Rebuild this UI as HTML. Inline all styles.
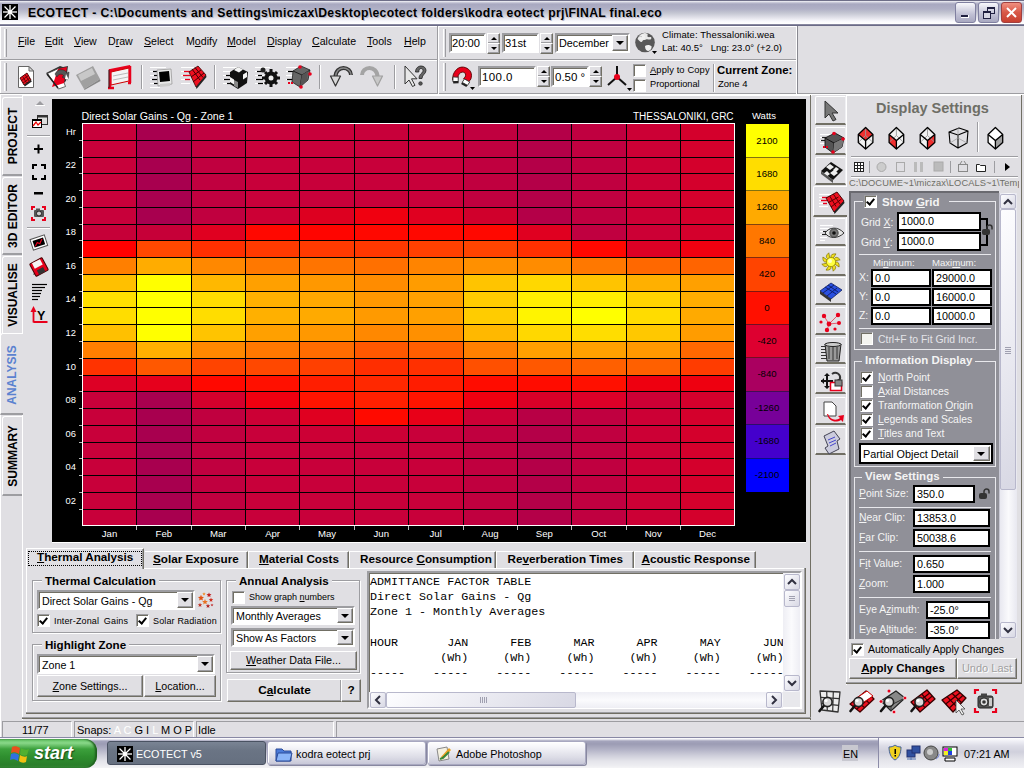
<!DOCTYPE html>
<html><head><meta charset="utf-8"><title>ECOTECT</title>
<style>
*{box-sizing:border-box;margin:0;padding:0}
html,body{width:1024px;height:768px;overflow:hidden}
body{position:relative;background:#e0dfe3;font-family:"Liberation Sans",sans-serif;font-size:11px;color:#000}
.a{position:absolute;white-space:nowrap}
u{text-decoration:underline}
.ylab{position:absolute;left:56px;width:20px;text-align:right;color:#fff;font-size:9.4px;line-height:14px}
.xlab{position:absolute;top:526px;width:40px;text-align:center;color:#fff;font-size:9.6px;line-height:14px}
#chart{position:absolute;left:0;top:0;width:1024px;height:768px}
.sunk{border-top:1px solid #9d9da1;border-left:1px solid #9d9da1;border-right:1px solid #fff;border-bottom:1px solid #fff}
.edit{position:absolute;background:#fff;border:2px solid;border-color:#9d9da1 #fff #fff #9d9da1;box-shadow:inset 1px 1px 0 #716f64;font-size:10.7px;line-height:14px;padding-left:3px}
.raised{background:#e0dfe3;border:1px solid;border-color:#fff #716f64 #716f64 #fff;box-shadow:inset -1px -1px 0 #9d9da1}
.btn{position:absolute;background:#e0dfe3;border:1px solid;border-color:#fff #716f64 #716f64 #fff;box-shadow:inset -1px -1px 0 #9d9da1;text-align:center;font-size:10.7px}
.grip{position:absolute;width:3px;border-left:1px solid #fff;border-right:1px solid #9d9da1}
.vsep{position:absolute;width:2px;border-left:1px solid #9d9da1;border-right:1px solid #fff}
.hsep{position:absolute;height:2px;border-top:1px solid #9d9da1;border-bottom:1px solid #fff}
.spin{position:absolute;width:14px}
.spin i{display:block;position:absolute;left:0;width:13px;background:#e0dfe3;border:1px solid;border-color:#fff #716f64 #716f64 #fff;box-shadow:inset -1px -1px 0 #9d9da1}
.spin i:after{content:"";position:absolute;left:3px;top:3px;border-left:3px solid transparent;border-right:3px solid transparent;border-bottom:3px solid #000}
.spin i+i:after{border-bottom:0;border-top:3px solid #000}
.ddb{position:absolute;width:16px;background:#e0dfe3;border:1px solid;border-color:#fff #716f64 #716f64 #fff;box-shadow:inset -1px -1px 0 #9d9da1}
.ddb:after{content:"";position:absolute;left:3px;top:50%;margin-top:-2px;border-left:4px solid transparent;border-right:4px solid transparent;border-top:4px solid #000}
.chk{position:absolute;width:13px;height:13px;background:#fff;border:1px solid;border-color:#9d9da1 #fff #fff #9d9da1;box-shadow:inset 1px 1px 0 #716f64}
.chk.on:after{content:"";position:absolute;left:3px;top:1px;width:3px;height:6px;border:solid #000;border-width:0 2px 2px 0;transform:rotate(40deg)}
.vtab{position:absolute;left:2px;width:21px;background:#e0dfe3;border:1px solid;border-color:#fff #fff #716f64 #fff;border-left:1px solid #fff}
.vtab span{position:absolute;left:50%;top:50%;transform:translate(-50%,-50%) rotate(-90deg);font-weight:bold;font-size:12px;white-space:nowrap}
.grp{position:absolute;border:1px solid #9d9da1;box-shadow:1px 1px 0 #fff,inset 1px 1px 0 #fff}
.grp>b{position:absolute;left:8px;top:-8px;background:#e0dfe3;padding:0 3px;font-size:11.6px;line-height:14px}
.sbb{border:1px solid #b8b8cc;border-radius:2px;background:linear-gradient(135deg,#fdfdff,#d8d8e4)}.sbb svg{position:absolute;left:0;top:0}
.wg{position:absolute;border:1px solid #e8e8ec}
.wl{color:#f4f4f4;font-size:10.4px;line-height:13px}
.bed{position:absolute;background:#fff;border:2px solid #000;font-size:10.8px;line-height:14px;padding-left:2px;white-space:nowrap}
</style></head><body>
<!-- title bar -->
<div class="a" style="left:0;top:0;width:1024px;height:26px;background:linear-gradient(#6e6e88 0,#6e6e88 1px,#f4f4f8 1px,#c8c8d8 2.5px,#a8a8c0 4px,#b0b0c6 9px,#c4c6d2 13px,#e4e4ec 18px,#f8f8fc 21px,#ffffff 23.5px,#8888a0 24.5px,#6a6a86 25px,#6a6a86 26px)"></div>
<div class="a" style="left:2px;top:4px;width:16px;height:16px;background:#000">
<svg width="16" height="16" style="position:absolute;left:0;top:0"><g stroke="#fff" stroke-width="1.3"><line x1="8" y1="1" x2="8" y2="15"/><line x1="1" y1="8" x2="15" y2="8"/><line x1="2.5" y1="2.5" x2="13.5" y2="13.5"/><line x1="13.5" y1="2.5" x2="2.5" y2="13.5"/></g><circle cx="8" cy="8" r="2" fill="#fff"/></svg></div>
<div class="a" style="left:28px;top:5px;font-weight:bold;font-size:12.2px;letter-spacing:0.34px;line-height:16px;color:#000;text-shadow:1px 1px 0 #b8b8c8">ECOTECT - C:\Documents and Settings\miczax\Desktop\ecotect folders\kodra eotect prj\FINAL final.eco</div>
<!-- window buttons -->
<div class="a" style="left:955px;top:2px;width:21px;height:21px;border:1px solid #8080a0;border-radius:3px;background:linear-gradient(#f8f8fc,#c0c0d4 60%,#a8a8c0)"><div class="a" style="left:5px;top:12px;width:8px;height:3px;background:#202040;border:1px solid #fff;border-width:0 1px 1px 0"></div></div>
<div class="a" style="left:978px;top:2px;width:21px;height:21px;border:1px solid #8080a0;border-radius:3px;background:linear-gradient(#f8f8fc,#c0c0d4 60%,#a8a8c0)"><div class="a" style="left:8px;top:4px;width:8px;height:7px;border:1px solid #202040;border-top-width:2px"></div><div class="a" style="left:4px;top:8px;width:8px;height:8px;border:1px solid #202040;border-top-width:2px;background:#d8d8e4"></div></div>
<div class="a" style="left:1001px;top:2px;width:21px;height:21px;border:1px solid #a04040;border-radius:3px;background:linear-gradient(#f09080,#d85848 50%,#c84030)"><svg width="19" height="19" style="position:absolute;left:0;top:0"><g stroke="#fff" stroke-width="2"><line x1="5" y1="5" x2="14" y2="14"/><line x1="14" y1="5" x2="5" y2="14"/></g></svg></div>
<!-- window left/right borders -->
<div class="a" style="left:0;top:26px;width:1px;height:712px;background:#fff"></div>
<!-- menu bar row -->
<div class="hsep" style="left:0;top:59px;width:438px"></div>
<div class="hsep" style="left:0;top:93px;width:1024px"></div>
<div class="a" style="left:0;top:26px;width:797px;height:1px;background:#fff"></div>
<div class="grip" style="left:4px;top:29px;height:28px"></div>
<div class="grip" style="left:4px;top:63px;height:28px"></div>
<div class="a" style="left:18px;top:35px;font-size:10.6px;line-height:13px;word-spacing:0">
<span class="a" style="left:0"><u>F</u>ile</span><span class="a" style="left:27px"><u>E</u>dit</span><span class="a" style="left:56px"><u>V</u>iew</span><span class="a" style="left:90px">D<u>r</u>aw</span><span class="a" style="left:126px"><u>S</u>elect</span><span class="a" style="left:168px">M<u>o</u>dify</span><span class="a" style="left:209px"><u>M</u>odel</span><span class="a" style="left:249px"><u>D</u>isplay</span><span class="a" style="left:294px"><u>C</u>alculate</span><span class="a" style="left:349px"><u>T</u>ools</span><span class="a" style="left:386px"><u>H</u>elp</span>
</div>
<div class="vsep" style="left:437px;top:26px;height:68px"></div>
<!-- toolbar icons row -->
<svg class="a" style="left:0;top:60px" width="440" height="34">
 <!-- new -->
 <path d="M18.5 6.5h10.5l4.5 4.5v16.5h-15z" fill="#fff" stroke="#666"/><path d="M29 6.5v4.5h4.5z" fill="#d8d8d8" stroke="#666"/>
 <path d="M20 18l7-5 4 7-7 5z" fill="#ee1020" stroke="#400" stroke-width="0.9"/><path d="M22.5 16.3l4 6.5M25 14.5l4 6.5M21.5 20.5l7-5M23 23l7-5" stroke="#500" stroke-width="0.8"/><path d="M24 25l7-5 0.8 1.5-7 5z" fill="#222"/>
 <!-- open folder -->
 <path d="M46 13l14-7 3 1 5 -1 -2 15 -8 7z" fill="#333"/>
 <path d="M47.5 13.5l11-5 7 18-7 2.5z" fill="#fff" stroke="#444" stroke-width="0.8"/>
 <path d="M52 27l6-18 9-2-3 16z" fill="#e8001c"/><path d="M47 14l11 14" stroke="#222" stroke-width="1.5"/>
 <path d="M55 14c2-5 9-6 12-1l2-1-1 8-6-3 2-1c-2-3-6-2-7 1z" fill="#555" stroke="#222" stroke-width="0.5"/><path d="M66 14l3 6-4-1z" fill="#fff"/>
 <!-- save grey -->
 <path d="M76 15l17-9 7 13-16 10z" fill="#a0a0a0"/><path d="M78 15l14-7 3 6-14 7z" fill="#c8c8c8"/><path d="M84 29l16-10 0.5 2-16 9z" fill="#888"/>
 <!-- plotter red -->
 <path d="M110 9l20-4 1 3-20 5z" fill="#e8001c"/><path d="M111 12l18-4 0 13-18 4z" fill="#f4f4f4" stroke="#c00" stroke-width="1"/><path d="M113 16l15-3M113 20l15-3" stroke="#bbb" stroke-width="1"/>
 <path d="M110 9v19M108 28h6M130 6v17M128 23h3" stroke="#e8001c" stroke-width="2.5"/><path d="M109 10v18" stroke="#222" stroke-width="1"/>
 <!-- sep -->
 <rect x="141" y="5" width="1" height="24" fill="#9d9da1"/><rect x="142" y="5" width="1" height="24" fill="#fff"/>
 <!-- screen icon -->
 <g stroke="#fff" stroke-width="1"><line x1="150" y1="7.5" x2="166" y2="7.5"/><line x1="150" y1="11.5" x2="164" y2="11.5"/><line x1="150" y1="15.5" x2="160" y2="15.5"/><line x1="150" y1="19.5" x2="160" y2="19.5"/><line x1="150" y1="23.5" x2="162" y2="23.5"/><line x1="150" y1="27.5" x2="160" y2="27.5"/></g>
 <g stroke="#000" stroke-width="1.2"><line x1="153" y1="11.5" x2="158" y2="11.5"/><line x1="154" y1="15.5" x2="158" y2="15.5"/><line x1="152" y1="19.5" x2="158" y2="19.5"/><line x1="154" y1="23.5" x2="158" y2="23.5"/></g>
 <path d="M157 10l14-1 1 15-14 2z" fill="#e8e8e8" stroke="#999" stroke-width="0.8"/><path d="M159 12l10-1 1 10-10 1z" fill="#000"/><path d="M160 24l10-1v3l-10 1z" fill="#ccc"/>
 <!-- red grid -->
 <g stroke="#fff" stroke-width="1"><line x1="181" y1="7.5" x2="194" y2="7.5"/><line x1="181" y1="11.5" x2="190" y2="11.5"/><line x1="181" y1="15.5" x2="188" y2="15.5"/><line x1="181" y1="19.5" x2="188" y2="19.5"/><line x1="181" y1="23.5" x2="190" y2="23.5"/></g>
 <g stroke="#e8001c" stroke-width="1.3"><line x1="184" y1="11.5" x2="191" y2="11.5"/><line x1="183" y1="15.5" x2="190" y2="15.5"/><line x1="185" y1="19.5" x2="190" y2="19.5"/></g>
 <path d="M189 12l9-6 8 9-10 12z" fill="#ee1020" stroke="#300" stroke-width="0.8"/><path d="M192 9l8 11M195 7.5l8 10M191 17l10-7M193 22l11-9" stroke="#400" stroke-width="1"/><path d="M196 27l10-12 0.5 2-10 12z" fill="#222"/>
 <rect x="214" y="5" width="1" height="24" fill="#9d9da1"/><rect x="215" y="5" width="1" height="24" fill="#fff"/>
 <!-- gear cube icons -->
 <g stroke="#fff" stroke-width="1"><line x1="223" y1="7.5" x2="238" y2="7.5"/><line x1="223" y1="11.5" x2="234" y2="11.5"/><line x1="223" y1="15.5" x2="232" y2="15.5"/><line x1="223" y1="19.5" x2="232" y2="19.5"/><line x1="223" y1="23.5" x2="234" y2="23.5"/></g>
 <g stroke="#000" stroke-width="1.2"><line x1="226" y1="15.5" x2="232" y2="15.5"/><line x1="224" y1="19.5" x2="232" y2="19.5"/><line x1="227" y1="23.5" x2="233" y2="23.5"/></g>
 <path d="M230 12l8-5 10 5-1 11-9 6-8-5z" fill="#111"/><path d="M238 7l5 2.5-4 3-5-2.5zM243 14.5l4-2.5v5l-4 2.5zM230 17l4 2.5v5l-4-2.5z" fill="#f4f4f4"/><path d="M234 20l4 2v6l-4-2z" fill="#888"/>
 <g stroke="#fff" stroke-width="1"><line x1="255" y1="7.5" x2="270" y2="7.5"/><line x1="255" y1="11.5" x2="266" y2="11.5"/><line x1="255" y1="15.5" x2="264" y2="15.5"/><line x1="255" y1="19.5" x2="264" y2="19.5"/><line x1="255" y1="23.5" x2="266" y2="23.5"/></g>
 <g stroke="#000" stroke-width="1.2"><line x1="257" y1="11.5" x2="262" y2="11.5"/><line x1="258" y1="15.5" x2="262" y2="15.5"/><line x1="256" y1="19.5" x2="263" y2="19.5"/><line x1="258" y1="23.5" x2="263" y2="23.5"/></g>
 <circle cx="271" cy="18" r="6.5" fill="#111"/><g stroke="#111" stroke-width="3"><path d="M271 9v18M262 18h18M265 12l12 12M277 12l-12 12"/></g><circle cx="271" cy="18" r="2.5" fill="#eee"/><circle cx="263" cy="10" r="2.5" fill="#222"/>
 <g stroke="#fff" stroke-width="1"><line x1="286" y1="7.5" x2="300" y2="7.5"/><line x1="286" y1="11.5" x2="296" y2="11.5"/><line x1="286" y1="15.5" x2="294" y2="15.5"/><line x1="286" y1="19.5" x2="294" y2="19.5"/></g>
 <g stroke="#000" stroke-width="1.2"><line x1="288" y1="11.5" x2="294" y2="11.5"/><line x1="287" y1="19.5" x2="293" y2="19.5"/></g>
 <path d="M293 11l8-5 9 4-2 10-8 7-8-5z" fill="#666" stroke="#222" stroke-width="0.8"/><path d="M293 11l9 4 8-5M302 15l-2 12" stroke="#222" fill="none"/><path d="M302 15l6-4-1 9-7 6z" fill="#555"/>
 <circle cx="300" cy="7" r="1.8" fill="#e8001c"/><circle cx="310" cy="14" r="1.8" fill="#e8001c"/><circle cx="301" cy="27" r="1.8" fill="#e8001c"/><rect x="288" y="22" width="2" height="2" fill="#e8001c"/><rect x="291" y="22" width="2" height="2" fill="#e8001c"/>
 <rect x="319" y="5" width="1" height="24" fill="#9d9da1"/><rect x="320" y="5" width="1" height="24" fill="#fff"/>
 <!-- undo/redo -->
 <path d="M335.5 17c0-6 4-9 8-9s7.5 3 7.5 7" stroke="#333" stroke-width="4" fill="none" stroke-linecap="butt"/><path d="M335.5 17c0-6 4-9 8-9s7.5 3 7.5 7" stroke="#888" stroke-width="1.5" fill="none"/>
 <path d="M330.5 16h10l-5 10z" fill="#d8d8d8" stroke="#333" stroke-width="1.2" stroke-linejoin="round"/>
 <path d="M377.5 17c0-6-4-9-8-9s-7.5 3-7.5 7" stroke="#a4a4a4" stroke-width="4" fill="none"/>
 <path d="M382.5 16h-10l5 10z" fill="#c8c8c8" stroke="#a0a0a0" stroke-width="1.2" stroke-linejoin="round"/>
 <rect x="394" y="5" width="1" height="24" fill="#9d9da1"/><rect x="395" y="5" width="1" height="24" fill="#fff"/>
 <!-- help arrow -->
 <path d="M405 6v18l4-4 3.5 6.5 2.5-1.2-3.5-6.5h5.5z" fill="#e8e8e8" stroke="#333" stroke-width="1"/>
 <path d="M415.5 12c0-4 3-6 5.5-6 3 0 5 2 5 4.5 0 3.5-4 4-4 8h-3c0-5 4-5 4-8 0-1.2-0.8-2-2-2-1.5 0-2.2 1.2-2.2 3.5z" fill="#666" stroke="#222" stroke-width="0.8"/><circle cx="420.5" cy="23.5" r="1.8" fill="#555" stroke="#222" stroke-width="0.6"/>
</svg>
<!-- right toolbar with date controls -->
<div class="grip" style="left:443px;top:29px;height:28px"></div>
<div class="grip" style="left:443px;top:63px;height:28px"></div>
<div class="hsep" style="left:440px;top:59px;width:358px"></div>
<div class="a" style="left:796px;top:26px;width:1px;height:68px;background:#fff"></div>
<div class="a" style="left:797px;top:26px;width:1px;height:68px;background:#888890"></div>
<div class="edit" style="left:449px;top:33px;width:37px;height:20px;padding-top:1px;padding-left:1px;font-size:11.2px">20:00</div>
<div class="spin" style="left:487px;top:33px;height:20px"><i style="top:0;height:11px"></i><i style="top:10px;height:11px"></i></div>
<div class="edit" style="left:502px;top:33px;width:37px;height:20px;padding-top:1px;padding-left:1px;font-size:11.2px">31st</div>
<div class="spin" style="left:540px;top:33px;height:20px"><i style="top:0;height:11px"></i><i style="top:10px;height:11px"></i></div>
<div class="edit" style="left:555px;top:33px;width:75px;height:20px;padding-top:1px;padding-left:2px;font-size:10.8px">December<div class="ddb" style="right:0;top:0;height:16px;width:16px"></div></div>
<svg class="a" style="left:634px;top:31px" width="26" height="26"><circle cx="11" cy="11.5" r="9.8" fill="#585858"/><path d="M3.5 8c1-3 4-5.5 7-6 2 0 4 1 3 2.5-1 1 1 2 2.5 1.5s2 1.5 0.5 2.5c-2 0.5-3-1-4.5 0-1.5 1-3 0-3.5 1.5-0.5 1.5-2 1-3 0z" fill="#e8e8e8"/><path d="M5 6c1-1 2-1 3 0" stroke="#999" fill="none"/><path d="M11 15c2-1.5 5-1.5 6.5 0.5 0.5 2-1 4-3 4.5-2 0-3.5-1.5-3.5-5z" fill="#f0f0f0"/><circle cx="8" cy="6" r="3" fill="#fff" opacity="0.35"/><path d="M18 20h5l-2.5 3z" fill="#000"/></svg>
<div class="a" style="left:662px;top:29px;font-size:9.5px;line-height:12px;letter-spacing:0.1px">Climate: Thessaloniki.wea</div>
<div class="a" style="left:662px;top:41.5px;font-size:9.5px;line-height:12px">Lat: 40.5°&nbsp;&nbsp; Lng: 23.0° (+2.0)</div>
<svg class="a" style="left:450px;top:64px" width="28" height="28"><g transform="rotate(20 12 13)"><path d="M3 14c0-7 4-11 9-11s9 3 9 9l-1 3-6-1 1-2c0-3-1-4-3-4s-4 2-4 5l1 4-5 2z" fill="#e8001c" stroke="#500" stroke-width="0.8"/><path d="M3.5 16l5-1.5 1.5 4-5 2zM15 14l6 1-1 4-6-1z" fill="#fff" stroke="#333" stroke-width="0.8"/><path d="M5 20l5-2 1 2-5 2zM14 18l6 1-0.5 2-6-1z" fill="#222"/></g><path d="M20 23h5l-2.5 3z" fill="#000"/></svg>
<div class="edit" style="left:478px;top:66px;width:58px;height:21px;padding-top:2px;padding-left:2px;font-size:11.5px;letter-spacing:0.4px">100.0</div>
<div class="spin" style="left:537px;top:66px;height:21px"><i style="top:0;height:11px"></i><i style="top:10px;height:11px"></i></div>
<div class="edit" style="left:551px;top:66px;width:38px;height:21px;padding-top:2px;padding-left:2px;font-size:11.5px">0.50 °</div>
<div class="spin" style="left:589px;top:66px;height:21px"><i style="top:0;height:11px"></i><i style="top:10px;height:11px"></i></div>
<svg class="a" style="left:605px;top:63px" width="28" height="28"><g stroke="#111" stroke-width="2"><line x1="12" y1="14" x2="12" y2="3"/><line x1="12" y1="14" x2="3" y2="22"/><line x1="12" y1="14" x2="21" y2="22"/></g><circle cx="12" cy="14" r="3" fill="#e8001c"/><path d="M22 25h5l-2.5 3z" fill="#000"/></svg>
<div class="chk" style="left:633px;top:64px"></div>
<div class="chk" style="left:633px;top:79px"></div>
<div class="a" style="left:650px;top:64px;font-size:9.4px;line-height:12px;letter-spacing:0.1px"><u>A</u>pply to Copy</div>
<div class="a" style="left:650px;top:78px;font-size:9.2px;line-height:12px">Proportional</div>
<div class="vsep" style="left:713px;top:64px;height:28px"></div>
<div class="a" style="left:717px;top:63px;font-size:11.4px;font-weight:bold;line-height:14px">Current Zone:</div>
<div class="a" style="left:718px;top:78px;font-size:9.5px;line-height:12px">Zone 4</div>
<!-- main panel -->
<div class="a" style="left:22px;top:95px;width:790px;height:1px;background:#fff"></div>
<div class="a" style="left:22px;top:95px;width:1px;height:625px;background:#fff"></div>
<div class="a" style="left:810px;top:95px;width:1px;height:625px;background:#716f64"></div>
<!-- vertical tabs -->
<div class="a" style="left:2px;top:97px;width:20px;height:79px;border-left:1px solid #fff;border-top:1px solid #fff;border-bottom:2px solid #9d9da1;border-radius:3px 0 0 0"></div>
<div class="a" style="left:2px;top:177px;width:20px;height:78px;border-left:1px solid #fff;border-top:1px solid #fff;border-bottom:2px solid #9d9da1;border-radius:3px 0 0 0"></div>
<div class="a" style="left:2px;top:256px;width:20px;height:79px;border-left:1px solid #fff;border-top:1px solid #fff;border-bottom:0;border-radius:3px 0 0 0"></div>
<div class="a" style="left:0px;top:333px;width:23px;height:82px;background:#e0dfe3;border-left:1px solid #fff;border-top:1px solid #fff;border-bottom:2px solid #9d9da1;border-radius:3px 0 0 0"></div>
<div class="a" style="left:2px;top:416px;width:20px;height:80px;border-left:1px solid #fff;border-top:1px solid #fff;border-bottom:2px solid #9d9da1;border-radius:3px 0 0 0"></div>
<div class="a" style="left:3px;top:136px;width:20px;height:0">
<div class="a" style="left:50%;top:0;transform:translate(-50%,-50%) rotate(-90deg);font-weight:bold;font-size:12px;line-height:14px">PROJECT</div></div>
<div class="a" style="left:3px;top:216px;width:20px;height:0">
<div class="a" style="left:50%;top:0;transform:translate(-50%,-50%) rotate(-90deg);font-weight:bold;font-size:12px;line-height:14px">3D EDITOR</div></div>
<div class="a" style="left:3px;top:295px;width:20px;height:0">
<div class="a" style="left:50%;top:0;transform:translate(-50%,-50%) rotate(-90deg);font-weight:bold;font-size:12px;line-height:14px">VISUALISE</div></div>
<div class="a" style="left:2px;top:375px;width:20px;height:0">
<div class="a" style="left:50%;top:0;transform:translate(-50%,-50%) rotate(-90deg);font-weight:bold;font-size:12px;line-height:14px;color:#5b82d0">ANALYSIS</div></div>
<div class="a" style="left:3px;top:456px;width:20px;height:0">
<div class="a" style="left:50%;top:0;transform:translate(-50%,-50%) rotate(-90deg);font-weight:bold;font-size:12px;line-height:14px">SUMMARY</div></div>
<!-- left tool column -->
<svg class="a" style="left:23px;top:96px" width="30" height="235">
 <path d="M13 9l4-4 4 4z" fill="#9d9da1"/><rect x="12" y="9" width="10" height="1" fill="#fff"/>
 <rect x="14.5" y="19.5" width="10" height="9" fill="#ddd" stroke="#333"/><rect x="14.5" y="19.5" width="10" height="2" fill="#333"/>
 <rect x="9" y="23" width="10" height="9" fill="#000"/><rect x="10" y="25" width="8" height="6" fill="#fff"/><path d="M10 30l3-4 2 3 3-3" stroke="#e00" stroke-width="1.3" fill="none"/>
 <rect x="4" y="39" width="23" height="1" fill="#9d9da1"/><rect x="4" y="40" width="23" height="1" fill="#fff"/>
 <rect x="11" y="52" width="9" height="2" fill="#000"/><rect x="14.5" y="48.5" width="2" height="9" fill="#000"/>
 <path d="M10 73v-4h4M18 69h4v4M22 79v4h-4M14 83h-4v-4" stroke="#000" stroke-width="2" fill="none"/>
 <rect x="11" y="96" width="9" height="2.5" fill="#000"/>
 <path d="M9 114v-3h3M19 111h3v3M22 121v3h-3M12 124h-3v-3" stroke="#e8001c" stroke-width="2" fill="none"/>
 <rect x="11" y="114" width="10" height="7" rx="1" fill="#555"/><circle cx="16" cy="117.5" r="2.5" fill="#ccc" stroke="#222"/><rect x="13" y="112.5" width="4" height="2" fill="#555"/>
 <rect x="4" y="131" width="23" height="1" fill="#9d9da1"/><rect x="4" y="132" width="23" height="1" fill="#fff"/>
 <g transform="rotate(-18 16 147)"><rect x="8.5" y="141" width="15" height="11" fill="#fff" stroke="#555" stroke-width="1"/><rect x="10.5" y="143" width="11" height="7" fill="#000"/><path d="M11.5 149l3-3 2 2 3.5-4" stroke="#e8001c" stroke-width="1.2" fill="none"/></g>
 <path d="M10 178l9-6 1 0.5-9 6.5z" fill="#555"/>
 <g transform="rotate(-28 16 171)"><rect x="9" y="164" width="14" height="14" rx="1" fill="#e8001c" stroke="#400" stroke-width="1"/><rect x="11.5" y="164.5" width="9" height="6" fill="#f4f4f4"/><rect x="12.5" y="173" width="7" height="5" fill="#333"/></g>
 <g stroke="#000" stroke-width="1.2"><line x1="9" y1="188.5" x2="24" y2="188.5"/><line x1="9" y1="191.5" x2="22" y2="191.5"/><line x1="9" y1="194.5" x2="19" y2="194.5"/><line x1="9" y1="197.5" x2="18" y2="197.5"/><line x1="9" y1="200.5" x2="17" y2="200.5"/><line x1="9" y1="203.5" x2="15" y2="203.5"/></g>
 <path d="M10.5 226h14M10.5 226.5v-12" stroke="#e8001c" stroke-width="1.8" fill="none"/><path d="M7.5 216l3-6 3 6z" fill="#e8001c"/>
 <text x="14" y="224" font-family="Liberation Sans" font-weight="bold" font-size="12.5" fill="#000">Y</text>
</svg>
<!-- chart bg -->
<div class="a" style="left:52px;top:99px;width:754px;height:444px;background:#000;border-bottom:1px solid #fff"></div>
<div id="chart">
<svg width="1024" height="768" style="position:absolute;left:0;top:0" shape-rendering="crispEdges">
<rect x="82.3" y="123.3" width="55.0" height="17.4" fill="#c8003a"/>
<rect x="136.7" y="123.3" width="55.0" height="17.4" fill="#a8004f"/>
<rect x="191.0" y="123.3" width="55.0" height="17.4" fill="#c0003f"/>
<rect x="245.4" y="123.3" width="55.0" height="17.4" fill="#c8003a"/>
<rect x="299.8" y="123.3" width="55.0" height="17.4" fill="#c8003a"/>
<rect x="354.1" y="123.3" width="55.0" height="17.4" fill="#c8003a"/>
<rect x="408.5" y="123.3" width="55.0" height="17.4" fill="#c8003a"/>
<rect x="462.9" y="123.3" width="55.0" height="17.4" fill="#c0003f"/>
<rect x="517.2" y="123.3" width="55.0" height="17.4" fill="#b40048"/>
<rect x="571.6" y="123.3" width="55.0" height="17.4" fill="#c00040"/>
<rect x="626.0" y="123.3" width="55.0" height="17.4" fill="#cc0035"/>
<rect x="680.3" y="123.3" width="55.0" height="17.4" fill="#d4002c"/>
<rect x="82.3" y="140.1" width="55.0" height="17.4" fill="#c8003a"/>
<rect x="136.7" y="140.1" width="55.0" height="17.4" fill="#a8004f"/>
<rect x="191.0" y="140.1" width="55.0" height="17.4" fill="#c0003f"/>
<rect x="245.4" y="140.1" width="55.0" height="17.4" fill="#c8003a"/>
<rect x="299.8" y="140.1" width="55.0" height="17.4" fill="#c8003a"/>
<rect x="354.1" y="140.1" width="55.0" height="17.4" fill="#c8003a"/>
<rect x="408.5" y="140.1" width="55.0" height="17.4" fill="#c8003a"/>
<rect x="462.9" y="140.1" width="55.0" height="17.4" fill="#c0003f"/>
<rect x="517.2" y="140.1" width="55.0" height="17.4" fill="#b40048"/>
<rect x="571.6" y="140.1" width="55.0" height="17.4" fill="#c00040"/>
<rect x="626.0" y="140.1" width="55.0" height="17.4" fill="#cc0035"/>
<rect x="680.3" y="140.1" width="55.0" height="17.4" fill="#d4002c"/>
<rect x="82.3" y="156.8" width="55.0" height="17.4" fill="#c8003a"/>
<rect x="136.7" y="156.8" width="55.0" height="17.4" fill="#a8004f"/>
<rect x="191.0" y="156.8" width="55.0" height="17.4" fill="#c0003f"/>
<rect x="245.4" y="156.8" width="55.0" height="17.4" fill="#c8003a"/>
<rect x="299.8" y="156.8" width="55.0" height="17.4" fill="#c8003a"/>
<rect x="354.1" y="156.8" width="55.0" height="17.4" fill="#c8003a"/>
<rect x="408.5" y="156.8" width="55.0" height="17.4" fill="#c8003a"/>
<rect x="462.9" y="156.8" width="55.0" height="17.4" fill="#c0003f"/>
<rect x="517.2" y="156.8" width="55.0" height="17.4" fill="#b40048"/>
<rect x="571.6" y="156.8" width="55.0" height="17.4" fill="#c00040"/>
<rect x="626.0" y="156.8" width="55.0" height="17.4" fill="#cc0035"/>
<rect x="680.3" y="156.8" width="55.0" height="17.4" fill="#d4002c"/>
<rect x="82.3" y="173.6" width="55.0" height="17.4" fill="#c8003a"/>
<rect x="136.7" y="173.6" width="55.0" height="17.4" fill="#a8004f"/>
<rect x="191.0" y="173.6" width="55.0" height="17.4" fill="#c0003f"/>
<rect x="245.4" y="173.6" width="55.0" height="17.4" fill="#c8003a"/>
<rect x="299.8" y="173.6" width="55.0" height="17.4" fill="#c8003a"/>
<rect x="354.1" y="173.6" width="55.0" height="17.4" fill="#c8003a"/>
<rect x="408.5" y="173.6" width="55.0" height="17.4" fill="#c8003a"/>
<rect x="462.9" y="173.6" width="55.0" height="17.4" fill="#c0003f"/>
<rect x="517.2" y="173.6" width="55.0" height="17.4" fill="#b40048"/>
<rect x="571.6" y="173.6" width="55.0" height="17.4" fill="#c00040"/>
<rect x="626.0" y="173.6" width="55.0" height="17.4" fill="#cc0035"/>
<rect x="680.3" y="173.6" width="55.0" height="17.4" fill="#d4002c"/>
<rect x="82.3" y="190.4" width="55.0" height="17.4" fill="#c8003a"/>
<rect x="136.7" y="190.4" width="55.0" height="17.4" fill="#a8004f"/>
<rect x="191.0" y="190.4" width="55.0" height="17.4" fill="#c0003f"/>
<rect x="245.4" y="190.4" width="55.0" height="17.4" fill="#c8003a"/>
<rect x="299.8" y="190.4" width="55.0" height="17.4" fill="#c8003a"/>
<rect x="354.1" y="190.4" width="55.0" height="17.4" fill="#c8003a"/>
<rect x="408.5" y="190.4" width="55.0" height="17.4" fill="#c8003a"/>
<rect x="462.9" y="190.4" width="55.0" height="17.4" fill="#c0003f"/>
<rect x="517.2" y="190.4" width="55.0" height="17.4" fill="#b40048"/>
<rect x="571.6" y="190.4" width="55.0" height="17.4" fill="#c00040"/>
<rect x="626.0" y="190.4" width="55.0" height="17.4" fill="#cc0035"/>
<rect x="680.3" y="190.4" width="55.0" height="17.4" fill="#d4002c"/>
<rect x="82.3" y="207.2" width="55.0" height="17.4" fill="#c8003a"/>
<rect x="136.7" y="207.2" width="55.0" height="17.4" fill="#a8004f"/>
<rect x="191.0" y="207.2" width="55.0" height="17.4" fill="#c0003f"/>
<rect x="245.4" y="207.2" width="55.0" height="17.4" fill="#cc0035"/>
<rect x="299.8" y="207.2" width="55.0" height="17.4" fill="#dd0020"/>
<rect x="354.1" y="207.2" width="55.0" height="17.4" fill="#f00010"/>
<rect x="408.5" y="207.2" width="55.0" height="17.4" fill="#e00020"/>
<rect x="462.9" y="207.2" width="55.0" height="17.4" fill="#d0002c"/>
<rect x="517.2" y="207.2" width="55.0" height="17.4" fill="#b40048"/>
<rect x="571.6" y="207.2" width="55.0" height="17.4" fill="#c00040"/>
<rect x="626.0" y="207.2" width="55.0" height="17.4" fill="#cc0035"/>
<rect x="680.3" y="207.2" width="55.0" height="17.4" fill="#d4002c"/>
<rect x="82.3" y="223.9" width="55.0" height="17.4" fill="#c60038"/>
<rect x="136.7" y="223.9" width="55.0" height="17.4" fill="#c60038"/>
<rect x="191.0" y="223.9" width="55.0" height="17.4" fill="#e00020"/>
<rect x="245.4" y="223.9" width="55.0" height="17.4" fill="#ff0800"/>
<rect x="299.8" y="223.9" width="55.0" height="17.4" fill="#ff0500"/>
<rect x="354.1" y="223.9" width="55.0" height="17.4" fill="#ff0800"/>
<rect x="408.5" y="223.9" width="55.0" height="17.4" fill="#ff0800"/>
<rect x="462.9" y="223.9" width="55.0" height="17.4" fill="#ff0800"/>
<rect x="517.2" y="223.9" width="55.0" height="17.4" fill="#e00020"/>
<rect x="571.6" y="223.9" width="55.0" height="17.4" fill="#c00040"/>
<rect x="626.0" y="223.9" width="55.0" height="17.4" fill="#cc0035"/>
<rect x="680.3" y="223.9" width="55.0" height="17.4" fill="#d4002c"/>
<rect x="82.3" y="240.7" width="55.0" height="17.4" fill="#ff0000"/>
<rect x="136.7" y="240.7" width="55.0" height="17.4" fill="#ff4800"/>
<rect x="191.0" y="240.7" width="55.0" height="17.4" fill="#ff3000"/>
<rect x="245.4" y="240.7" width="55.0" height="17.4" fill="#ff3a00"/>
<rect x="299.8" y="240.7" width="55.0" height="17.4" fill="#ff3a00"/>
<rect x="354.1" y="240.7" width="55.0" height="17.4" fill="#ff3800"/>
<rect x="408.5" y="240.7" width="55.0" height="17.4" fill="#ff4000"/>
<rect x="462.9" y="240.7" width="55.0" height="17.4" fill="#ff4400"/>
<rect x="517.2" y="240.7" width="55.0" height="17.4" fill="#ff3000"/>
<rect x="571.6" y="240.7" width="55.0" height="17.4" fill="#ff0800"/>
<rect x="626.0" y="240.7" width="55.0" height="17.4" fill="#dd0025"/>
<rect x="680.3" y="240.7" width="55.0" height="17.4" fill="#f00010"/>
<rect x="82.3" y="257.5" width="55.0" height="17.4" fill="#ff7f00"/>
<rect x="136.7" y="257.5" width="55.0" height="17.4" fill="#ffac00"/>
<rect x="191.0" y="257.5" width="55.0" height="17.4" fill="#ff8800"/>
<rect x="245.4" y="257.5" width="55.0" height="17.4" fill="#ff7800"/>
<rect x="299.8" y="257.5" width="55.0" height="17.4" fill="#ff7400"/>
<rect x="354.1" y="257.5" width="55.0" height="17.4" fill="#ff7000"/>
<rect x="408.5" y="257.5" width="55.0" height="17.4" fill="#ff8400"/>
<rect x="462.9" y="257.5" width="55.0" height="17.4" fill="#ff9000"/>
<rect x="517.2" y="257.5" width="55.0" height="17.4" fill="#ff8c00"/>
<rect x="571.6" y="257.5" width="55.0" height="17.4" fill="#ff7800"/>
<rect x="626.0" y="257.5" width="55.0" height="17.4" fill="#ff6800"/>
<rect x="680.3" y="257.5" width="55.0" height="17.4" fill="#ff6400"/>
<rect x="82.3" y="274.2" width="55.0" height="17.4" fill="#ffc000"/>
<rect x="136.7" y="274.2" width="55.0" height="17.4" fill="#ffff00"/>
<rect x="191.0" y="274.2" width="55.0" height="17.4" fill="#ffb800"/>
<rect x="245.4" y="274.2" width="55.0" height="17.4" fill="#ffa000"/>
<rect x="299.8" y="274.2" width="55.0" height="17.4" fill="#ff9800"/>
<rect x="354.1" y="274.2" width="55.0" height="17.4" fill="#ff8c00"/>
<rect x="408.5" y="274.2" width="55.0" height="17.4" fill="#ff9c00"/>
<rect x="462.9" y="274.2" width="55.0" height="17.4" fill="#ffc400"/>
<rect x="517.2" y="274.2" width="55.0" height="17.4" fill="#ffd800"/>
<rect x="571.6" y="274.2" width="55.0" height="17.4" fill="#ffc400"/>
<rect x="626.0" y="274.2" width="55.0" height="17.4" fill="#ffb000"/>
<rect x="680.3" y="274.2" width="55.0" height="17.4" fill="#ffa000"/>
<rect x="82.3" y="291.0" width="55.0" height="17.4" fill="#ffe000"/>
<rect x="136.7" y="291.0" width="55.0" height="17.4" fill="#ffff00"/>
<rect x="191.0" y="291.0" width="55.0" height="17.4" fill="#ffdc00"/>
<rect x="245.4" y="291.0" width="55.0" height="17.4" fill="#ffb000"/>
<rect x="299.8" y="291.0" width="55.0" height="17.4" fill="#ffa800"/>
<rect x="354.1" y="291.0" width="55.0" height="17.4" fill="#ff9800"/>
<rect x="408.5" y="291.0" width="55.0" height="17.4" fill="#ffa000"/>
<rect x="462.9" y="291.0" width="55.0" height="17.4" fill="#ffcc00"/>
<rect x="517.2" y="291.0" width="55.0" height="17.4" fill="#ffee00"/>
<rect x="571.6" y="291.0" width="55.0" height="17.4" fill="#ffee00"/>
<rect x="626.0" y="291.0" width="55.0" height="17.4" fill="#ffd400"/>
<rect x="680.3" y="291.0" width="55.0" height="17.4" fill="#ffac00"/>
<rect x="82.3" y="307.8" width="55.0" height="17.4" fill="#ffdd00"/>
<rect x="136.7" y="307.8" width="55.0" height="17.4" fill="#ffff00"/>
<rect x="191.0" y="307.8" width="55.0" height="17.4" fill="#ffdd00"/>
<rect x="245.4" y="307.8" width="55.0" height="17.4" fill="#ffb000"/>
<rect x="299.8" y="307.8" width="55.0" height="17.4" fill="#ffaa00"/>
<rect x="354.1" y="307.8" width="55.0" height="17.4" fill="#ff9a00"/>
<rect x="408.5" y="307.8" width="55.0" height="17.4" fill="#ffa000"/>
<rect x="462.9" y="307.8" width="55.0" height="17.4" fill="#ffcc00"/>
<rect x="517.2" y="307.8" width="55.0" height="17.4" fill="#fff400"/>
<rect x="571.6" y="307.8" width="55.0" height="17.4" fill="#ffff00"/>
<rect x="626.0" y="307.8" width="55.0" height="17.4" fill="#ffdc00"/>
<rect x="680.3" y="307.8" width="55.0" height="17.4" fill="#ffaa00"/>
<rect x="82.3" y="324.6" width="55.0" height="17.4" fill="#ffc000"/>
<rect x="136.7" y="324.6" width="55.0" height="17.4" fill="#ffff00"/>
<rect x="191.0" y="324.6" width="55.0" height="17.4" fill="#ffc400"/>
<rect x="245.4" y="324.6" width="55.0" height="17.4" fill="#ffa000"/>
<rect x="299.8" y="324.6" width="55.0" height="17.4" fill="#ff9800"/>
<rect x="354.1" y="324.6" width="55.0" height="17.4" fill="#ff8800"/>
<rect x="408.5" y="324.6" width="55.0" height="17.4" fill="#ff9000"/>
<rect x="462.9" y="324.6" width="55.0" height="17.4" fill="#ffb800"/>
<rect x="517.2" y="324.6" width="55.0" height="17.4" fill="#ffd800"/>
<rect x="571.6" y="324.6" width="55.0" height="17.4" fill="#ffdd00"/>
<rect x="626.0" y="324.6" width="55.0" height="17.4" fill="#ffc800"/>
<rect x="680.3" y="324.6" width="55.0" height="17.4" fill="#ff9c00"/>
<rect x="82.3" y="341.3" width="55.0" height="17.4" fill="#ff7f00"/>
<rect x="136.7" y="341.3" width="55.0" height="17.4" fill="#ffb000"/>
<rect x="191.0" y="341.3" width="55.0" height="17.4" fill="#ff8800"/>
<rect x="245.4" y="341.3" width="55.0" height="17.4" fill="#ff7800"/>
<rect x="299.8" y="341.3" width="55.0" height="17.4" fill="#ff6c00"/>
<rect x="354.1" y="341.3" width="55.0" height="17.4" fill="#ff5800"/>
<rect x="408.5" y="341.3" width="55.0" height="17.4" fill="#ff5e00"/>
<rect x="462.9" y="341.3" width="55.0" height="17.4" fill="#ff8000"/>
<rect x="517.2" y="341.3" width="55.0" height="17.4" fill="#ffa000"/>
<rect x="571.6" y="341.3" width="55.0" height="17.4" fill="#ffa000"/>
<rect x="626.0" y="341.3" width="55.0" height="17.4" fill="#ff9800"/>
<rect x="680.3" y="341.3" width="55.0" height="17.4" fill="#ff6800"/>
<rect x="82.3" y="358.1" width="55.0" height="17.4" fill="#ff3300"/>
<rect x="136.7" y="358.1" width="55.0" height="17.4" fill="#ff5800"/>
<rect x="191.0" y="358.1" width="55.0" height="17.4" fill="#ff4400"/>
<rect x="245.4" y="358.1" width="55.0" height="17.4" fill="#ff4800"/>
<rect x="299.8" y="358.1" width="55.0" height="17.4" fill="#ff4000"/>
<rect x="354.1" y="358.1" width="55.0" height="17.4" fill="#ff2e00"/>
<rect x="408.5" y="358.1" width="55.0" height="17.4" fill="#ff3000"/>
<rect x="462.9" y="358.1" width="55.0" height="17.4" fill="#ff5000"/>
<rect x="517.2" y="358.1" width="55.0" height="17.4" fill="#ff5800"/>
<rect x="571.6" y="358.1" width="55.0" height="17.4" fill="#ff6000"/>
<rect x="626.0" y="358.1" width="55.0" height="17.4" fill="#ff6000"/>
<rect x="680.3" y="358.1" width="55.0" height="17.4" fill="#ff3c00"/>
<rect x="82.3" y="374.9" width="55.0" height="17.4" fill="#dd0025"/>
<rect x="136.7" y="374.9" width="55.0" height="17.4" fill="#e6001c"/>
<rect x="191.0" y="374.9" width="55.0" height="17.4" fill="#ff0800"/>
<rect x="245.4" y="374.9" width="55.0" height="17.4" fill="#ff1000"/>
<rect x="299.8" y="374.9" width="55.0" height="17.4" fill="#ff1e00"/>
<rect x="354.1" y="374.9" width="55.0" height="17.4" fill="#ff2800"/>
<rect x="408.5" y="374.9" width="55.0" height="17.4" fill="#ff1c00"/>
<rect x="462.9" y="374.9" width="55.0" height="17.4" fill="#ff0c00"/>
<rect x="517.2" y="374.9" width="55.0" height="17.4" fill="#ff0c00"/>
<rect x="571.6" y="374.9" width="55.0" height="17.4" fill="#ff1000"/>
<rect x="626.0" y="374.9" width="55.0" height="17.4" fill="#ee0010"/>
<rect x="680.3" y="374.9" width="55.0" height="17.4" fill="#ee0010"/>
<rect x="82.3" y="391.6" width="55.0" height="17.4" fill="#c8003a"/>
<rect x="136.7" y="391.6" width="55.0" height="17.4" fill="#a8004f"/>
<rect x="191.0" y="391.6" width="55.0" height="17.4" fill="#d4002c"/>
<rect x="245.4" y="391.6" width="55.0" height="17.4" fill="#f00010"/>
<rect x="299.8" y="391.6" width="55.0" height="17.4" fill="#ff1400"/>
<rect x="354.1" y="391.6" width="55.0" height="17.4" fill="#ff2000"/>
<rect x="408.5" y="391.6" width="55.0" height="17.4" fill="#ff1400"/>
<rect x="462.9" y="391.6" width="55.0" height="17.4" fill="#f00010"/>
<rect x="517.2" y="391.6" width="55.0" height="17.4" fill="#d80028"/>
<rect x="571.6" y="391.6" width="55.0" height="17.4" fill="#dd0028"/>
<rect x="626.0" y="391.6" width="55.0" height="17.4" fill="#cc0035"/>
<rect x="680.3" y="391.6" width="55.0" height="17.4" fill="#d4002c"/>
<rect x="82.3" y="408.4" width="55.0" height="17.4" fill="#c8003a"/>
<rect x="136.7" y="408.4" width="55.0" height="17.4" fill="#a8004f"/>
<rect x="191.0" y="408.4" width="55.0" height="17.4" fill="#c0003f"/>
<rect x="245.4" y="408.4" width="55.0" height="17.4" fill="#cc0035"/>
<rect x="299.8" y="408.4" width="55.0" height="17.4" fill="#e00020"/>
<rect x="354.1" y="408.4" width="55.0" height="17.4" fill="#ff0a00"/>
<rect x="408.5" y="408.4" width="55.0" height="17.4" fill="#e80018"/>
<rect x="462.9" y="408.4" width="55.0" height="17.4" fill="#cc0035"/>
<rect x="517.2" y="408.4" width="55.0" height="17.4" fill="#b80045"/>
<rect x="571.6" y="408.4" width="55.0" height="17.4" fill="#c00040"/>
<rect x="626.0" y="408.4" width="55.0" height="17.4" fill="#cc0035"/>
<rect x="680.3" y="408.4" width="55.0" height="17.4" fill="#d4002c"/>
<rect x="82.3" y="425.2" width="55.0" height="17.4" fill="#c8003a"/>
<rect x="136.7" y="425.2" width="55.0" height="17.4" fill="#a8004f"/>
<rect x="191.0" y="425.2" width="55.0" height="17.4" fill="#c0003f"/>
<rect x="245.4" y="425.2" width="55.0" height="17.4" fill="#c8003a"/>
<rect x="299.8" y="425.2" width="55.0" height="17.4" fill="#cc0035"/>
<rect x="354.1" y="425.2" width="55.0" height="17.4" fill="#cc0035"/>
<rect x="408.5" y="425.2" width="55.0" height="17.4" fill="#c8003a"/>
<rect x="462.9" y="425.2" width="55.0" height="17.4" fill="#c0003f"/>
<rect x="517.2" y="425.2" width="55.0" height="17.4" fill="#b40048"/>
<rect x="571.6" y="425.2" width="55.0" height="17.4" fill="#c00040"/>
<rect x="626.0" y="425.2" width="55.0" height="17.4" fill="#cc0035"/>
<rect x="680.3" y="425.2" width="55.0" height="17.4" fill="#d4002c"/>
<rect x="82.3" y="441.9" width="55.0" height="17.4" fill="#c8003a"/>
<rect x="136.7" y="441.9" width="55.0" height="17.4" fill="#a8004f"/>
<rect x="191.0" y="441.9" width="55.0" height="17.4" fill="#c0003f"/>
<rect x="245.4" y="441.9" width="55.0" height="17.4" fill="#c8003a"/>
<rect x="299.8" y="441.9" width="55.0" height="17.4" fill="#c8003a"/>
<rect x="354.1" y="441.9" width="55.0" height="17.4" fill="#c8003a"/>
<rect x="408.5" y="441.9" width="55.0" height="17.4" fill="#c8003a"/>
<rect x="462.9" y="441.9" width="55.0" height="17.4" fill="#c0003f"/>
<rect x="517.2" y="441.9" width="55.0" height="17.4" fill="#b40048"/>
<rect x="571.6" y="441.9" width="55.0" height="17.4" fill="#c00040"/>
<rect x="626.0" y="441.9" width="55.0" height="17.4" fill="#cc0035"/>
<rect x="680.3" y="441.9" width="55.0" height="17.4" fill="#d4002c"/>
<rect x="82.3" y="458.7" width="55.0" height="17.4" fill="#c8003a"/>
<rect x="136.7" y="458.7" width="55.0" height="17.4" fill="#a8004f"/>
<rect x="191.0" y="458.7" width="55.0" height="17.4" fill="#c0003f"/>
<rect x="245.4" y="458.7" width="55.0" height="17.4" fill="#c8003a"/>
<rect x="299.8" y="458.7" width="55.0" height="17.4" fill="#c8003a"/>
<rect x="354.1" y="458.7" width="55.0" height="17.4" fill="#c8003a"/>
<rect x="408.5" y="458.7" width="55.0" height="17.4" fill="#c8003a"/>
<rect x="462.9" y="458.7" width="55.0" height="17.4" fill="#c0003f"/>
<rect x="517.2" y="458.7" width="55.0" height="17.4" fill="#b40048"/>
<rect x="571.6" y="458.7" width="55.0" height="17.4" fill="#c00040"/>
<rect x="626.0" y="458.7" width="55.0" height="17.4" fill="#cc0035"/>
<rect x="680.3" y="458.7" width="55.0" height="17.4" fill="#d4002c"/>
<rect x="82.3" y="475.5" width="55.0" height="17.4" fill="#c8003a"/>
<rect x="136.7" y="475.5" width="55.0" height="17.4" fill="#a8004f"/>
<rect x="191.0" y="475.5" width="55.0" height="17.4" fill="#c0003f"/>
<rect x="245.4" y="475.5" width="55.0" height="17.4" fill="#c8003a"/>
<rect x="299.8" y="475.5" width="55.0" height="17.4" fill="#c8003a"/>
<rect x="354.1" y="475.5" width="55.0" height="17.4" fill="#c8003a"/>
<rect x="408.5" y="475.5" width="55.0" height="17.4" fill="#c8003a"/>
<rect x="462.9" y="475.5" width="55.0" height="17.4" fill="#c0003f"/>
<rect x="517.2" y="475.5" width="55.0" height="17.4" fill="#b40048"/>
<rect x="571.6" y="475.5" width="55.0" height="17.4" fill="#c00040"/>
<rect x="626.0" y="475.5" width="55.0" height="17.4" fill="#cc0035"/>
<rect x="680.3" y="475.5" width="55.0" height="17.4" fill="#d4002c"/>
<rect x="82.3" y="492.3" width="55.0" height="17.4" fill="#c8003a"/>
<rect x="136.7" y="492.3" width="55.0" height="17.4" fill="#a8004f"/>
<rect x="191.0" y="492.3" width="55.0" height="17.4" fill="#c0003f"/>
<rect x="245.4" y="492.3" width="55.0" height="17.4" fill="#c8003a"/>
<rect x="299.8" y="492.3" width="55.0" height="17.4" fill="#c8003a"/>
<rect x="354.1" y="492.3" width="55.0" height="17.4" fill="#c8003a"/>
<rect x="408.5" y="492.3" width="55.0" height="17.4" fill="#c8003a"/>
<rect x="462.9" y="492.3" width="55.0" height="17.4" fill="#c0003f"/>
<rect x="517.2" y="492.3" width="55.0" height="17.4" fill="#b40048"/>
<rect x="571.6" y="492.3" width="55.0" height="17.4" fill="#c00040"/>
<rect x="626.0" y="492.3" width="55.0" height="17.4" fill="#cc0035"/>
<rect x="680.3" y="492.3" width="55.0" height="17.4" fill="#d4002c"/>
<rect x="82.3" y="509.0" width="55.0" height="17.4" fill="#c8003a"/>
<rect x="136.7" y="509.0" width="55.0" height="17.4" fill="#a8004f"/>
<rect x="191.0" y="509.0" width="55.0" height="17.4" fill="#c0003f"/>
<rect x="245.4" y="509.0" width="55.0" height="17.4" fill="#c8003a"/>
<rect x="299.8" y="509.0" width="55.0" height="17.4" fill="#c8003a"/>
<rect x="354.1" y="509.0" width="55.0" height="17.4" fill="#c8003a"/>
<rect x="408.5" y="509.0" width="55.0" height="17.4" fill="#c8003a"/>
<rect x="462.9" y="509.0" width="55.0" height="17.4" fill="#c0003f"/>
<rect x="517.2" y="509.0" width="55.0" height="17.4" fill="#b40048"/>
<rect x="571.6" y="509.0" width="55.0" height="17.4" fill="#c00040"/>
<rect x="626.0" y="509.0" width="55.0" height="17.4" fill="#cc0035"/>
<rect x="680.3" y="509.0" width="55.0" height="17.4" fill="#d4002c"/>
<rect x="82.3" y="140" width="652.4" height="1" fill="#000"/>
<rect x="82.3" y="157" width="652.4" height="1" fill="#000"/>
<rect x="82.3" y="173" width="652.4" height="1" fill="#000"/>
<rect x="82.3" y="190" width="652.4" height="1" fill="#000"/>
<rect x="82.3" y="207" width="652.4" height="1" fill="#000"/>
<rect x="82.3" y="224" width="652.4" height="1" fill="#000"/>
<rect x="82.3" y="240" width="652.4" height="1" fill="#000"/>
<rect x="82.3" y="257" width="652.4" height="1" fill="#000"/>
<rect x="82.3" y="274" width="652.4" height="1" fill="#000"/>
<rect x="82.3" y="291" width="652.4" height="1" fill="#000"/>
<rect x="82.3" y="307" width="652.4" height="1" fill="#000"/>
<rect x="82.3" y="324" width="652.4" height="1" fill="#000"/>
<rect x="82.3" y="341" width="652.4" height="1" fill="#000"/>
<rect x="82.3" y="358" width="652.4" height="1" fill="#000"/>
<rect x="82.3" y="375" width="652.4" height="1" fill="#000"/>
<rect x="82.3" y="391" width="652.4" height="1" fill="#000"/>
<rect x="82.3" y="408" width="652.4" height="1" fill="#000"/>
<rect x="82.3" y="425" width="652.4" height="1" fill="#000"/>
<rect x="82.3" y="442" width="652.4" height="1" fill="#000"/>
<rect x="82.3" y="458" width="652.4" height="1" fill="#000"/>
<rect x="82.3" y="475" width="652.4" height="1" fill="#000"/>
<rect x="82.3" y="492" width="652.4" height="1" fill="#000"/>
<rect x="82.3" y="509" width="652.4" height="1" fill="#000"/>
<rect x="136" y="123.3" width="1" height="402.5" fill="#000"/>
<rect x="191" y="123.3" width="1" height="402.5" fill="#000"/>
<rect x="245" y="123.3" width="1" height="402.5" fill="#000"/>
<rect x="299" y="123.3" width="1" height="402.5" fill="#000"/>
<rect x="354" y="123.3" width="1" height="402.5" fill="#000"/>
<rect x="408" y="123.3" width="1" height="402.5" fill="#000"/>
<rect x="463" y="123.3" width="1" height="402.5" fill="#000"/>
<rect x="517" y="123.3" width="1" height="402.5" fill="#000"/>
<rect x="571" y="123.3" width="1" height="402.5" fill="#000"/>
<rect x="626" y="123.3" width="1" height="402.5" fill="#000"/>
<rect x="680" y="123.3" width="1" height="402.5" fill="#000"/>
<rect x="82" y="123" width="653" height="1" fill="#fff"/><rect x="82" y="525" width="653" height="1" fill="#fff"/><rect x="82" y="123" width="1" height="403" fill="#fff"/><rect x="734" y="123" width="1" height="403" fill="#fff"/>
<rect x="79" y="140" width="3" height="1" fill="#bbb"/>
<rect x="79" y="157" width="3" height="1" fill="#bbb"/>
<rect x="79" y="173" width="3" height="1" fill="#bbb"/>
<rect x="79" y="190" width="3" height="1" fill="#bbb"/>
<rect x="79" y="207" width="3" height="1" fill="#bbb"/>
<rect x="79" y="224" width="3" height="1" fill="#bbb"/>
<rect x="79" y="240" width="3" height="1" fill="#bbb"/>
<rect x="79" y="257" width="3" height="1" fill="#bbb"/>
<rect x="79" y="274" width="3" height="1" fill="#bbb"/>
<rect x="79" y="291" width="3" height="1" fill="#bbb"/>
<rect x="79" y="307" width="3" height="1" fill="#bbb"/>
<rect x="79" y="324" width="3" height="1" fill="#bbb"/>
<rect x="79" y="341" width="3" height="1" fill="#bbb"/>
<rect x="79" y="358" width="3" height="1" fill="#bbb"/>
<rect x="79" y="375" width="3" height="1" fill="#bbb"/>
<rect x="79" y="391" width="3" height="1" fill="#bbb"/>
<rect x="79" y="408" width="3" height="1" fill="#bbb"/>
<rect x="79" y="425" width="3" height="1" fill="#bbb"/>
<rect x="79" y="442" width="3" height="1" fill="#bbb"/>
<rect x="79" y="458" width="3" height="1" fill="#bbb"/>
<rect x="79" y="475" width="3" height="1" fill="#bbb"/>
<rect x="79" y="492" width="3" height="1" fill="#bbb"/>
<rect x="79" y="509" width="3" height="1" fill="#bbb"/>
<rect x="136" y="526" width="1" height="4" fill="#bbb"/>
<rect x="191" y="526" width="1" height="4" fill="#bbb"/>
<rect x="245" y="526" width="1" height="4" fill="#bbb"/>
<rect x="299" y="526" width="1" height="4" fill="#bbb"/>
<rect x="354" y="526" width="1" height="4" fill="#bbb"/>
<rect x="408" y="526" width="1" height="4" fill="#bbb"/>
<rect x="463" y="526" width="1" height="4" fill="#bbb"/>
<rect x="517" y="526" width="1" height="4" fill="#bbb"/>
<rect x="571" y="526" width="1" height="4" fill="#bbb"/>
<rect x="626" y="526" width="1" height="4" fill="#bbb"/>
<rect x="680" y="526" width="1" height="4" fill="#bbb"/>
<rect x="746" y="123.8" width="43" height="33.9" fill="#ffff00"/>
<text x="767" y="143.5" text-anchor="middle" font-family="Liberation Sans" font-size="9.6" fill="#000">2100</text>
<rect x="746" y="157.2" width="43" height="33.9" fill="#ffdd00"/>
<rect x="746" y="157" width="43" height="1" fill="#1a1a1a" opacity="0.55"/>
<text x="767" y="176.9" text-anchor="middle" font-family="Liberation Sans" font-size="9.6" fill="#000">1680</text>
<rect x="746" y="190.6" width="43" height="33.9" fill="#ffaa00"/>
<rect x="746" y="190" width="43" height="1" fill="#1a1a1a" opacity="0.55"/>
<text x="767" y="210.3" text-anchor="middle" font-family="Liberation Sans" font-size="9.6" fill="#000">1260</text>
<rect x="746" y="224.0" width="43" height="33.9" fill="#ff7700"/>
<rect x="746" y="224" width="43" height="1" fill="#1a1a1a" opacity="0.55"/>
<text x="767" y="243.7" text-anchor="middle" font-family="Liberation Sans" font-size="9.6" fill="#000">840</text>
<rect x="746" y="257.4" width="43" height="33.9" fill="#ff4400"/>
<rect x="746" y="257" width="43" height="1" fill="#1a1a1a" opacity="0.55"/>
<text x="767" y="277.1" text-anchor="middle" font-family="Liberation Sans" font-size="9.6" fill="#000">420</text>
<rect x="746" y="290.8" width="43" height="33.9" fill="#ff1000"/>
<rect x="746" y="291" width="43" height="1" fill="#1a1a1a" opacity="0.55"/>
<text x="767" y="310.5" text-anchor="middle" font-family="Liberation Sans" font-size="9.6" fill="#000">0</text>
<rect x="746" y="324.2" width="43" height="33.9" fill="#dd0030"/>
<rect x="746" y="324" width="43" height="1" fill="#1a1a1a" opacity="0.55"/>
<text x="767" y="343.9" text-anchor="middle" font-family="Liberation Sans" font-size="9.6" fill="#000">-420</text>
<rect x="746" y="357.6" width="43" height="33.9" fill="#aa0060"/>
<rect x="746" y="357" width="43" height="1" fill="#1a1a1a" opacity="0.55"/>
<text x="767" y="377.3" text-anchor="middle" font-family="Liberation Sans" font-size="9.6" fill="#000">-840</text>
<rect x="746" y="391.0" width="43" height="33.9" fill="#770099"/>
<rect x="746" y="391" width="43" height="1" fill="#1a1a1a" opacity="0.55"/>
<text x="767" y="410.7" text-anchor="middle" font-family="Liberation Sans" font-size="9.6" fill="#000">-1260</text>
<rect x="746" y="424.4" width="43" height="33.9" fill="#4400cc"/>
<rect x="746" y="424" width="43" height="1" fill="#1a1a1a" opacity="0.55"/>
<text x="767" y="444.1" text-anchor="middle" font-family="Liberation Sans" font-size="9.6" fill="#000">-1680</text>
<rect x="746" y="457.8" width="43" height="33.9" fill="#0000ff"/>
<rect x="746" y="458" width="43" height="1" fill="#1a1a1a" opacity="0.55"/>
<text x="767" y="477.5" text-anchor="middle" font-family="Liberation Sans" font-size="9.6" fill="#000">-2100</text>
</svg><div class="ylab" style="top:124.7px">Hr</div>
<div class="ylab" style="top:158.2px">22</div>
<div class="ylab" style="top:191.8px">20</div>
<div class="ylab" style="top:225.3px">18</div>
<div class="ylab" style="top:258.9px">16</div>
<div class="ylab" style="top:292.4px">14</div>
<div class="ylab" style="top:325.9px">12</div>
<div class="ylab" style="top:359.5px">10</div>
<div class="ylab" style="top:393.0px">08</div>
<div class="ylab" style="top:426.6px">06</div>
<div class="ylab" style="top:460.1px">04</div>
<div class="ylab" style="top:493.6px">02</div>
<div class="xlab" style="left:89.5px;top:527px">Jan</div>
<div class="xlab" style="left:143.9px;top:527px">Feb</div>
<div class="xlab" style="left:198.2px;top:527px">Mar</div>
<div class="xlab" style="left:252.6px;top:527px">Apr</div>
<div class="xlab" style="left:307.0px;top:527px">May</div>
<div class="xlab" style="left:361.3px;top:527px">Jun</div>
<div class="xlab" style="left:415.7px;top:527px">Jul</div>
<div class="xlab" style="left:470.1px;top:527px">Aug</div>
<div class="xlab" style="left:524.4px;top:527px">Sep</div>
<div class="xlab" style="left:578.8px;top:527px">Oct</div>
<div class="xlab" style="left:633.2px;top:527px">Nov</div>
<div class="xlab" style="left:687.5px;top:527px">Dec</div><div class="a" style="left:81.5px;top:110px;color:#fff;font-size:10.6px;line-height:13px">Direct Solar Gains - Qg - Zone 1</div>
<div class="a" style="left:633px;top:110px;color:#fff;font-size:10px;line-height:13px">THESSALONIKI, GRC</div>
<div class="a" style="left:752px;top:110px;color:#fff;font-size:9.5px;line-height:12px">Watts</div>
</div>
<!-- outer main panel bottom -->
<div class="a" style="left:22px;top:717px;width:789px;height:1px;background:#9d9da1"></div><div class="a" style="left:22px;top:718px;width:789px;height:1px;background:#716f64"></div>
<!-- bottom tab strip -->
<div class="a" style="left:26px;top:568px;width:780px;height:1px;background:#fff"></div>
<div class="a" style="left:26px;top:568px;width:1px;height:145px;background:#fff"></div>
<div class="a" style="left:804px;top:568px;width:1px;height:145px;background:#9d9da1"></div>
<div class="a" style="left:805px;top:568px;width:1px;height:146px;background:#716f64"></div>
<div class="a" style="left:26px;top:712px;width:779px;height:1px;background:#9d9da1"></div>
<div class="a" style="left:26px;top:713px;width:780px;height:1px;background:#716f64"></div>
<!-- tabs -->
<div class="a" style="left:26px;top:548px;width:118px;height:21px;background:#e0dfe3;border:1px solid;border-color:#fff #716f64 transparent #fff;border-bottom:0;box-shadow:inset -1px 0 0 #9d9da1"></div>
<div class="a" style="left:28px;top:551px;width:114px;height:15px;border:1px dotted #000"></div>
<div class="a" style="left:37px;top:550px;font-weight:bold;font-size:11.7px;line-height:14px"><u>T</u>hermal Analysis</div>
<div class="a" style="left:145px;top:551px;width:103px;height:17px;border-top:1px solid #fff;border-right:1px solid #716f64;box-shadow:inset -1px 0 0 #9d9da1"></div>
<div class="a" style="left:153px;top:552px;font-weight:bold;font-size:11.7px;line-height:14px"><u>S</u>olar Exposure</div>
<div class="a" style="left:248px;top:551px;width:101px;height:17px;border-top:1px solid #fff;border-left:1px solid #fff;border-right:1px solid #716f64;box-shadow:inset -1px 0 0 #9d9da1"></div>
<div class="a" style="left:259px;top:552px;font-weight:bold;font-size:11.7px;line-height:14px"><u>M</u>aterial Costs</div>
<div class="a" style="left:349px;top:551px;width:147px;height:17px;border-top:1px solid #fff;border-left:1px solid #fff;border-right:1px solid #716f64;box-shadow:inset -1px 0 0 #9d9da1"></div>
<div class="a" style="left:360px;top:552px;font-weight:bold;font-size:11.7px;line-height:14px">Resource <u>C</u>onsumption</div>
<div class="a" style="left:496px;top:551px;width:138px;height:17px;border-top:1px solid #fff;border-left:1px solid #fff;border-right:1px solid #716f64;box-shadow:inset -1px 0 0 #9d9da1"></div>
<div class="a" style="left:507.5px;top:552px;font-weight:bold;font-size:11.7px;line-height:14px">Re<u>v</u>erberation Times</div>
<div class="a" style="left:634px;top:551px;width:122px;height:17px;border-top:1px solid #fff;border-left:1px solid #fff;border-right:1px solid #716f64;box-shadow:inset -1px 0 0 #9d9da1"></div>
<div class="a" style="left:641.5px;top:552px;font-weight:bold;font-size:11.7px;line-height:14px"><u>A</u>coustic Response</div>
<!-- Thermal Calculation group -->
<div class="grp" style="left:32px;top:580px;width:189px;height:53px"><b style="left:9px;top:-7px;padding:0 3px">Thermal Calculation</b></div>
<div class="edit" style="left:37px;top:590px;width:158px;height:20px;padding-top:2px">Direct Solar Gains - Qg<div class="ddb" style="right:0;top:0;height:16px"></div></div>
<svg class="a" style="left:196px;top:591px" width="18" height="18"><path d="M5.0 3.8 L5.8 5.8 L8.0 6.0 L6.4 7.4 L6.9 9.6 L5.0 8.4 L3.1 9.6 L3.6 7.4 L2.0 6.0 L4.2 5.8Z" fill="#e05010"/><path d="M13.0 1.4 L13.7 3.1 L15.5 3.2 L14.1 4.4 L14.5 6.1 L13.0 5.2 L11.5 6.1 L11.9 4.4 L10.5 3.2 L12.3 3.1Z" fill="#c02020"/><path d="M15.0 6.6 L15.6 8.1 L17.3 8.3 L16.0 9.3 L16.4 10.9 L15.0 10.1 L13.6 10.9 L14.0 9.3 L12.7 8.3 L14.4 8.1Z" fill="#d03020"/><path d="M9.0 8.0 L9.8 9.9 L11.9 10.1 L10.3 11.4 L10.8 13.4 L9.0 12.3 L7.2 13.4 L7.7 11.4 L6.1 10.1 L8.2 9.9Z" fill="#e87020"/><path d="M4.0 11.7 L4.6 13.2 L6.2 13.3 L5.0 14.3 L5.4 15.9 L4.0 15.0 L2.6 15.9 L3.0 14.3 L1.8 13.3 L3.4 13.2Z" fill="#c03020"/><path d="M12.0 12.7 L12.6 14.2 L14.2 14.3 L13.0 15.3 L13.4 16.9 L12.0 16.0 L10.6 16.9 L11.0 15.3 L9.8 14.3 L11.4 14.2Z" fill="#b02020"/><path d="M8.0 1.2 L8.5 2.3 L9.7 2.4 L8.8 3.3 L9.1 4.5 L8.0 3.8 L6.9 4.5 L7.2 3.3 L6.3 2.4 L7.5 2.3Z" fill="#f09030"/><path d="M16.0 12.4 L16.4 13.4 L17.5 13.5 L16.7 14.2 L16.9 15.3 L16.0 14.7 L15.1 15.3 L15.3 14.2 L14.5 13.5 L15.6 13.4Z" fill="#c03030"/></svg>
<div class="chk on" style="left:37px;top:614px"></div>
<div class="a" style="left:54px;top:615px;font-size:9px;line-height:12px;letter-spacing:0.15px;word-spacing:2px">Inter-Zonal Gains</div>
<div class="chk on" style="left:136px;top:614px"></div>
<div class="a" style="left:153px;top:615px;font-size:9px;line-height:12px;letter-spacing:0.15px">Solar Radiation</div>
<!-- Highlight zone group -->
<div class="grp" style="left:32px;top:644px;width:189px;height:57px"><b style="left:9px;top:-7px;padding:0 3px">Highlight Zone</b></div>
<div class="edit" style="left:37px;top:654px;width:178px;height:20px;padding-top:2px">Zone 1<div class="ddb" style="right:0;top:0;height:16px"></div></div>
<div class="btn" style="left:37px;top:675px;width:106px;height:22px;line-height:20px"><u>Z</u>one Settings...</div>
<div class="btn" style="left:144px;top:675px;width:72px;height:22px;line-height:20px"><u>L</u>ocation...</div>
<!-- Annual analysis group -->
<div class="grp" style="left:226px;top:580px;width:134px;height:93px"><b style="left:9px;top:-7px;padding:0 3px">Annual Analysis</b></div>
<div class="chk" style="left:232px;top:591px"></div>
<div class="a" style="left:249px;top:591px;font-size:9px;line-height:12px">Show graph <u>n</u>umbers</div>
<div class="edit" style="left:231px;top:606px;width:124px;height:19px;padding-top:1px">Monthly Averages<div class="ddb" style="right:0;top:0;height:15px"></div></div>
<div class="edit" style="left:231px;top:628px;width:124px;height:19px;padding-top:1px">Show As Factors<div class="ddb" style="right:0;top:0;height:15px"></div></div>
<div class="btn" style="left:230px;top:651px;width:127px;height:19px;line-height:17px"><u>W</u>eather Data File...</div>
<div class="btn" style="left:227px;top:679px;width:115px;height:23px;line-height:21px;font-weight:bold;font-size:11.8px">C<u>a</u>lculate</div>
<div class="btn" style="left:341px;top:679px;width:20px;height:23px;line-height:21px;font-weight:bold;font-size:11.8px">?</div>
<!-- text area -->
<div class="a" style="left:367px;top:571px;width:435px;height:138px;background:#fff;border:2px solid;border-color:#9d9da1 #fff #fff #9d9da1;box-shadow:inset 1px 1px 0 #716f64"></div>
<div class="a" style="left:369px;top:573px;width:414px;height:119px;overflow:hidden"><pre style="position:absolute;left:1px;top:2px;white-space:pre;font-family:'Liberation Mono',monospace;font-size:11.7px;line-height:15.2px;color:#000">ADMITTANCE FACTOR TABLE
Direct Solar Gains - Qg
Zone 1 - Monthly Averages

HOUR       JAN      FEB      MAR      APR      MAY      JUN
          (Wh)     (Wh)     (Wh)     (Wh)     (Wh)     (Wh)
-----    -----    -----    -----    -----    -----    -----</pre></div>
<!-- vertical scrollbar -->
<div class="a" style="left:783px;top:573px;width:17px;height:119px;background:linear-gradient(90deg,#eeeef4,#fbfbfd 50%,#eeeef4)"></div>
<div class="a sbb" style="left:784px;top:574px;width:16px;height:16px"><svg width="14" height="14"><path d="M3 9l4-4 4 4" stroke="#303040" stroke-width="2" fill="none"/></svg></div>
<div class="a sbb" style="left:784px;top:590px;width:16px;height:17px"><svg width="14" height="15"><path d="M4 5.5h6M4 7.5h6M4 9.5h6" stroke="#a0a0b0" stroke-width="1"/></svg></div>
<div class="a sbb" style="left:784px;top:675px;width:16px;height:16px"><svg width="14" height="14"><path d="M3 5l4 4 4-4" stroke="#303040" stroke-width="2" fill="none"/></svg></div>
<!-- horizontal scrollbar -->
<div class="a" style="left:369px;top:692px;width:414px;height:16px;background:linear-gradient(#eeeef4,#fbfbfd 50%,#eeeef4)"></div>
<div class="a sbb" style="left:370px;top:692px;width:16px;height:16px"><svg width="14" height="14"><path d="M9 3l-4 4 4 4" stroke="#303040" stroke-width="2" fill="none"/></svg></div>
<div class="a sbb" style="left:386px;top:692px;width:190px;height:16px"><svg width="188" height="14"><path d="M93.5 4v6M95.5 4v6M97.5 4v6M99.5 4v6" stroke="#a0a0b0" stroke-width="1"/></svg></div>
<div class="a sbb" style="left:766px;top:692px;width:16px;height:16px"><svg width="14" height="14"><path d="M5 3l4 4-4 4" stroke="#303040" stroke-width="2" fill="none"/></svg></div>
<div class="a" style="left:783px;top:692px;width:17px;height:15px;background:#e8e8ec"></div>
<!-- right tool column -->
<div class="a" style="left:813px;top:95px;width:33px;height:625px;background:#e0dfe3"></div>
<div class="a" style="left:846px;top:95px;width:1px;height:590px;background:#fff"></div>
<div class="a" style="left:815px;top:96px;width:31px;height:29px;border-left:1px solid #fff;border-top:1px solid #fff;border-right:1px solid #f0f0f4;border-bottom:2px solid #716f64;border-radius:2px 0 0 0"></div>
<svg class="a" style="left:816px;top:96px" width="30" height="30"><path d="M9 5l0 17 4-4 4 7 3-1.5-4-6.5 6 0z" fill="#777" stroke="#333" stroke-width="1"/></svg>
<div class="a" style="left:815px;top:127px;width:31px;height:28px;border-left:1px solid #fff;border-top:1px solid #fff;border-right:1px solid #f0f0f4;border-bottom:2px solid #716f64;border-radius:2px 0 0 0"></div>
<svg class="a" style="left:816px;top:127px" width="30" height="30"><g stroke="#fff" stroke-width="1"><line x1="4" y1="7.5" x2="16" y2="7.5"/><line x1="4" y1="10.5" x2="12" y2="10.5"/><line x1="4" y1="13.5" x2="10" y2="13.5"/><line x1="4" y1="16.5" x2="10" y2="16.5"/></g><g stroke="#222" stroke-width="1.2"><line x1="6" y1="10.5" x2="11" y2="10.5"/><line x1="5" y1="13.5" x2="10" y2="13.5"/></g><path d="M9 11l10-5 9 5-2 9-9 6-8-6z" fill="#555" stroke="#111" stroke-width="0.9"/><path d="M9 11l9 5 10-5M18 16l-1 10" stroke="#111" fill="none"/><path d="M18 16l10-5-2 9-9 6z" fill="#777"/><circle cx="18" cy="6.5" r="1.8" fill="#e8001c"/><circle cx="27" cy="12" r="1.8" fill="#e8001c"/><circle cx="17" cy="25" r="1.8" fill="#e8001c"/><rect x="7" y="19" width="2" height="2" fill="#e8001c"/><rect x="10" y="19" width="2" height="2" fill="#e8001c"/></svg>
<div class="a" style="left:815px;top:157px;width:31px;height:28px;border-left:1px solid #fff;border-top:1px solid #fff;border-right:1px solid #f0f0f4;border-bottom:2px solid #716f64;border-radius:2px 0 0 0"></div>
<svg class="a" style="left:816px;top:157px" width="30" height="30"><path d="M5 14l10-9 12 8-10 10z" fill="#111"/><path d="M10 10l4-3 4 3-4 3zM14 16l4-3 4 3-4 3zM7 17l4-3 3 3-4 3zM20 10l3 2-3 3-3-2z" fill="#eee"/><path d="M5 14l12 9v3l-12-9z" fill="#555"/></svg>
<div class="a" style="left:813px;top:186px;width:34px;height:31px;background:#e0dfe3;border-left:1px solid #fff;border-top:1px solid #fff;border-bottom:2px solid #716f64;border-radius:2px 0 0 0"></div>
<svg class="a" style="left:816px;top:187px" width="30" height="30"><g stroke="#fff" stroke-width="1.2"><line x1="3" y1="7.5" x2="16" y2="7.5"/><line x1="3" y1="10.5" x2="13" y2="10.5"/><line x1="3" y1="13.5" x2="11" y2="13.5"/><line x1="3" y1="16.5" x2="11" y2="16.5"/><line x1="3" y1="19.5" x2="12" y2="19.5"/></g><g stroke="#e8001c" stroke-width="1.4"><line x1="6" y1="10.5" x2="12" y2="10.5"/><line x1="5" y1="13.5" x2="11" y2="13.5"/><line x1="7" y1="16.5" x2="11" y2="16.5"/></g><path d="M10 11l11-6 7 9-10 11z" fill="#ee1020" stroke="#300" stroke-width="0.9"/><path d="M13.7 9l6.3 10.5M17.3 7l7.3 10.8M12.5 15.5l10-5.5M15 20l10.5-8" stroke="#500" stroke-width="1"/><path d="M18 25l10-11 0.5 2-10 11z" fill="#222"/></svg>
<div class="a" style="left:815px;top:218px;width:31px;height:28px;border-left:1px solid #fff;border-top:1px solid #fff;border-right:1px solid #f0f0f4;border-bottom:2px solid #716f64;border-radius:2px 0 0 0"></div>
<svg class="a" style="left:816px;top:218px" width="30" height="30"><g stroke="#fff" stroke-width="1.1"><line x1="4" y1="7.5" x2="17" y2="7.5"/><line x1="4" y1="10.5" x2="13" y2="10.5"/><line x1="4" y1="13.5" x2="11" y2="13.5"/><line x1="4" y1="16.5" x2="11" y2="16.5"/><line x1="4" y1="19.5" x2="11" y2="19.5"/><line x1="4" y1="22.5" x2="9" y2="22.5"/></g><g stroke="#222" stroke-width="1.1"><line x1="7" y1="13.5" x2="11" y2="13.5"/><line x1="6" y1="16.5" x2="11" y2="16.5"/></g><path d="M9 15c4-6 13-7 19 0-6 6-15 6-19 0z" fill="#e4e4e4" stroke="#333" stroke-width="1"/><circle cx="18" cy="15" r="4.2" fill="#777" stroke="#333" stroke-width="0.8"/><circle cx="18" cy="15" r="1.8" fill="#111"/></svg>
<div class="a" style="left:815px;top:247px;width:31px;height:29px;border-left:1px solid #fff;border-top:1px solid #fff;border-right:1px solid #f0f0f4;border-bottom:2px solid #716f64;border-radius:2px 0 0 0"></div>
<svg class="a" style="left:816px;top:247px" width="30" height="30"><path d="M19.5 15.0Q23.5 14.2 23.1 20.0L18.9 17.2ZM18.2 18.2Q21.6 20.4 17.2 24.2L16.3 19.3ZM15.0 19.5Q15.8 23.5 10.0 23.1L12.8 18.9ZM11.8 18.2Q9.6 21.6 5.8 17.2L10.7 16.3ZM10.5 15.0Q6.5 15.8 6.9 10.0L11.1 12.8ZM11.8 11.8Q8.4 9.6 12.8 5.8L13.7 10.7ZM15.0 10.5Q14.2 6.5 20.0 6.9L17.2 11.1ZM18.2 11.8Q20.4 8.4 24.2 12.8L19.3 13.7Z" fill="#f0e020" stroke="#807000" stroke-width="0.7"/><circle cx="15" cy="15" r="4.6" fill="#ffff40" stroke="#a09000" stroke-width="0.8"/><circle cx="14" cy="14" r="2" fill="#fff" opacity="0.7"/></svg>
<div class="a" style="left:815px;top:277px;width:31px;height:28px;border-left:1px solid #fff;border-top:1px solid #fff;border-right:1px solid #f0f0f4;border-bottom:2px solid #716f64;border-radius:2px 0 0 0"></div>
<svg class="a" style="left:816px;top:277px" width="30" height="30"><path d="M4 14l11-8 11 7-11 9z" fill="#2a50e0" stroke="#102060" stroke-width="0.8"/><path d="M9 10l11 7M12 8l10 7M7 16l11-8M11 19l10-8" stroke="#102070" stroke-width="1"/><path d="M4 14l11 8v3l-11-8z" fill="#333"/></svg>
<div class="a" style="left:815px;top:307px;width:31px;height:28px;border-left:1px solid #fff;border-top:1px solid #fff;border-right:1px solid #f0f0f4;border-bottom:2px solid #716f64;border-radius:2px 0 0 0"></div>
<svg class="a" style="left:816px;top:307px" width="30" height="30"><g fill="#e8001c"><circle cx="8" cy="9" r="2.2"/><circle cx="22" cy="8" r="2.2"/><circle cx="5" cy="15" r="1.6"/><circle cx="13" cy="17" r="2.4"/><circle cx="23" cy="16" r="2"/><circle cx="11" cy="23" r="2.2"/><circle cx="19" cy="22" r="1.6"/></g><path d="M8 9l5 8 9-9M13 17l10-1M13 17l-2 6" stroke="#e8001c" stroke-width="0.6" fill="none"/></svg>
<div class="a" style="left:815px;top:337px;width:31px;height:27px;border-left:1px solid #fff;border-top:1px solid #fff;border-right:1px solid #f0f0f4;border-bottom:2px solid #716f64;border-radius:2px 0 0 0"></div>
<svg class="a" style="left:816px;top:337px" width="30" height="30"><g stroke="#333" stroke-width="1"><line x1="5" y1="9.5" x2="11" y2="9.5"/><line x1="5" y1="12.5" x2="10" y2="12.5"/><line x1="5" y1="15.5" x2="10" y2="15.5"/><line x1="5" y1="18.5" x2="10" y2="18.5"/><line x1="5" y1="21.5" x2="11" y2="21.5"/></g><path d="M9 7h16l-2 17h-12z" fill="#999" stroke="#222"/><ellipse cx="17" cy="7.5" rx="8" ry="2" fill="#ccc" stroke="#222"/><path d="M13 10v12M17 10v13M21 10v12" stroke="#333"/></svg>
<div class="a" style="left:815px;top:367px;width:31px;height:27px;border-left:1px solid #fff;border-top:1px solid #fff;border-right:1px solid #f0f0f4;border-bottom:2px solid #716f64;border-radius:2px 0 0 0"></div>
<svg class="a" style="left:816px;top:367px" width="30" height="30"><path d="M5 14h12M11 8v12" stroke="#111" stroke-width="2"/><path d="M5 14l3-3v6zM11 6l-3 3h6zM11 22l-3-3h6z" fill="#111"/><path d="M16 7c4-3 9 0 8 5l-3 2" stroke="#333" stroke-width="2" fill="none"/><rect x="14.5" y="15.5" width="11" height="8" fill="#fff" stroke="#e8001c" stroke-width="1.5"/><rect x="19" y="13" width="7" height="6" fill="#888" stroke="#333"/></svg>
<div class="a" style="left:815px;top:397px;width:31px;height:28px;border-left:1px solid #fff;border-top:1px solid #fff;border-right:1px solid #f0f0f4;border-bottom:2px solid #716f64;border-radius:2px 0 0 0"></div>
<svg class="a" style="left:816px;top:397px" width="30" height="30"><path d="M8 5h8l4 4v10h-12z" fill="#fff" stroke="#444"/><path d="M12 17c2 6 8 7 12 4l-2-2 6-1-1 7-2-2c-5 3-12 2-14-6z" fill="#e8001c"/></svg>
<div class="a" style="left:815px;top:427px;width:31px;height:28px;border-left:1px solid #fff;border-top:1px solid #fff;border-right:1px solid #f0f0f4;border-bottom:2px solid #716f64;border-radius:2px 0 0 0"></div>
<svg class="a" style="left:816px;top:427px" width="30" height="30"><path d="M8 9l10-5 6 8-3 2 2 8-10 5-4-6 3-2z" fill="#ccd" stroke="#445" stroke-width="1"/><path d="M12 13l7-3M13 16l7-3M14 19l6-3" stroke="#44c" stroke-width="1"/></svg>
<!-- display settings panel -->
<div class="a" style="left:846px;top:95px;width:176px;height:1px;background:#fff"></div>
<div class="a" style="left:1021px;top:95px;width:1px;height:589px;background:#716f64"></div>
<div class="a" style="left:846px;top:683px;width:176px;height:1px;background:#716f64"></div>
<div class="a" style="left:846px;top:682px;width:175px;height:1px;background:#9d9da1"></div>
<div class="a" style="left:876px;top:100px;font-weight:bold;font-size:14.5px;line-height:17px;color:#6e6e66">Display Settings</div>
<svg class="a" style="left:846px;top:120px" width="176" height="70">
 <path d="M19.6 7.5 L26.9 14.5 L19.6 20.6 L12.3 14.5Z" fill="#f03030"/><path d="M12.3 14.5 L19.6 20.6 L19.6 29.0 L12.3 22.4Z" fill="#f2f2f2"/><path d="M19.6 20.6 L26.9 14.5 L26.9 22.4 L19.6 29.0Z" fill="#f2f2f2"/><path d="M19.6 7.5 L19.6 15.5 M12.3 22.4 L19.6 15.5 L26.9 22.4" stroke="#999" stroke-width="0.9" fill="none"/><path d="M19.6 7.5 L26.9 14.5 L26.9 22.4 L19.6 29.0 L12.3 22.4 L12.3 14.5Z" fill="none" stroke="#000" stroke-width="1.3" stroke-linejoin="round"/><path d="M12.3 14.5 L19.6 20.6 L26.9 14.5 M19.6 20.6 L19.6 29" fill="none" stroke="#000" stroke-width="1.3"/><path d="M50.4 7.5 L57.7 14.5 L50.4 20.6 L43.1 14.5Z" fill="#f2f2f2"/><path d="M43.1 14.5 L50.4 20.6 L50.4 29.0 L43.1 22.4Z" fill="#f03030"/><path d="M50.4 20.6 L57.7 14.5 L57.7 22.4 L50.4 29.0Z" fill="#f2f2f2"/><path d="M50.4 7.5 L50.4 15.5 M43.1 22.4 L50.4 15.5 L57.7 22.4" stroke="#999" stroke-width="0.9" fill="none"/><path d="M50.4 7.5 L57.7 14.5 L57.7 22.4 L50.4 29.0 L43.1 22.4 L43.1 14.5Z" fill="none" stroke="#000" stroke-width="1.3" stroke-linejoin="round"/><path d="M43.1 14.5 L50.4 20.6 L57.7 14.5 M50.4 20.6 L50.4 29" fill="none" stroke="#000" stroke-width="1.3"/><path d="M81.5 7.5 L88.8 14.5 L81.5 20.6 L74.2 14.5Z" fill="#f2f2f2"/><path d="M74.2 14.5 L81.5 20.6 L81.5 29.0 L74.2 22.4Z" fill="#f2f2f2"/><path d="M81.5 20.6 L88.8 14.5 L88.8 22.4 L81.5 29.0Z" fill="#f03030"/><path d="M81.5 7.5 L81.5 15.5 M74.2 22.4 L81.5 15.5 L88.8 22.4" stroke="#999" stroke-width="0.9" fill="none"/><path d="M81.5 7.5 L88.8 14.5 L88.8 22.4 L81.5 29.0 L74.2 22.4 L74.2 14.5Z" fill="none" stroke="#000" stroke-width="1.3" stroke-linejoin="round"/><path d="M74.2 14.5 L81.5 20.6 L88.8 14.5 M81.5 20.6 L81.5 29" fill="none" stroke="#000" stroke-width="1.3"/><path d="M103 12 L113 8 L122 11 L121 23 L112 28 L104 23Z M103 12 L112 15 L122 11 M112 15 L112 28" fill="none" stroke="#000" stroke-width="1.1" stroke-linejoin="round"/><path d="M104 23 L112 18 L121 23 M112 8 L112 18" stroke="#999" stroke-width="0.7" fill="none"/><path d="M149.4 7.5 L156.7 14.5 L149.4 20.6 L142.1 14.5Z" fill="#fff"/><path d="M142.1 14.5 L149.4 20.6 L149.4 29.0 L142.1 22.4Z" fill="#fff"/><path d="M149.4 20.6 L156.7 14.5 L156.7 22.4 L149.4 29.0Z" fill="#a0a0a0"/><path d="M149.4 7.5 L156.7 14.5 L156.7 22.4 L149.4 29.0 L142.1 22.4 L142.1 14.5Z" fill="none" stroke="#000" stroke-width="1.3" stroke-linejoin="round"/><path d="M142.1 14.5 L149.4 20.6 L156.7 14.5 M149.4 20.6 L149.4 29" fill="none" stroke="#000" stroke-width="1.3"/>
 <rect x="131" y="2" width="1" height="30" fill="#9d9da1"/><rect x="132" y="2" width="1" height="30" fill="#fff"/>
 <rect x="5" y="36" width="167" height="1" fill="#9d9da1"/><rect x="5" y="37" width="167" height="1" fill="#fff"/>
 <rect x="5" y="56" width="167" height="1" fill="#9d9da1"/><rect x="5" y="57" width="167" height="1" fill="#fff"/>
 <!-- media row -->
 <rect x="8.5" y="42.5" width="9" height="9" fill="#fff" stroke="#222"/><path d="M8 45.5h10M8 48.5h10M11.5 42v10M14.5 42v10" stroke="#222" stroke-width="1"/>
 <rect x="23" y="41" width="1" height="12" fill="#9d9da1"/>
 <circle cx="35.5" cy="47" r="4.5" fill="#ccc" stroke="#aaa"/>
 <rect x="50.5" y="42.5" width="8" height="9" fill="none" stroke="#aaa"/>
 <rect x="68" y="42" width="3" height="10" fill="#bbb"/><rect x="74" y="42" width="3" height="10" fill="#bbb"/>
 <rect x="88" y="42" width="9" height="9" fill="#bbb" stroke="#aaa"/>
 <rect x="104" y="41" width="1" height="12" fill="#9d9da1"/>
 <rect x="112.5" y="44.5" width="9" height="7" fill="none" stroke="#888"/><path d="M114 44l2-3M120 44l-2-3" stroke="#888"/>
 <path d="M130.5 44.5h3l1 1h5v6h-9z" fill="#fff" stroke="#222"/>
 <rect x="148" y="41" width="1" height="12" fill="#9d9da1"/>
 <path d="M159 43l5 4-5 4z" fill="#000"/>
</svg>
<div class="a" style="left:849px;top:177px;width:170px;overflow:hidden;font-size:9.3px;line-height:12px;color:#6e6e66;letter-spacing:0.1px">C:\DOCUME~1\miczax\LOCALS~1\Temp</div>
<!-- grey settings area -->
<div class="a" style="left:849px;top:191px;width:150px;height:448px;background:#909098;border-top:2px solid #6a6a70;border-left:2px solid #6a6a70;overflow:hidden" id="gset">
<div class="wg" style="left:3px;top:8px;width:142px;height:149px"></div>
<div class="a" style="left:12px;top:2px;width:16px;height:13px;background:#909098"></div>
<div class="chk on" style="left:13px;top:2px"></div>
<div class="a wl" style="left:28px;top:2px;width:70px;padding-left:3px;font-weight:bold;font-size:11.5px;line-height:14px;background:#909098">Show <u>G</u>rid</div>
<div class="a wl" style="left:10px;top:23px">Grid <u>X</u>:</div>
<div class="a wl" style="left:10px;top:43px">Grid <u>Y</u>:</div>
<div class="bed" style="left:46px;top:19px;width:84px;height:19px">1000.0</div>
<div class="bed" style="left:46px;top:39px;width:84px;height:19px">1000.0</div>
<div class="a" style="left:130px;top:25px;width:7px;height:28px;border:2px solid #000;border-left:0"></div>
<svg class="a" style="left:130px;top:31px" width="14" height="14"><path d="M6 5v-1.5a2.5 2.5 0 0 1 5 0v2" stroke="#333" stroke-width="1.5" fill="none"/><rect x="1" y="5" width="8" height="6" rx="2" fill="#333"/></svg>
<div class="a" style="left:8px;top:61px;width:132px;height:1px;background:#e8e8ec"></div>
<div class="a wl" style="left:22px;top:63px;font-size:9.6px">Mi<u>n</u>imum:</div>
<div class="a wl" style="left:81px;top:63px;font-size:9.6px">Maxi<u>m</u>um:</div>
<div class="a wl" style="left:8px;top:78px">X:</div><div class="a wl" style="left:8px;top:97px">Y:</div><div class="a wl" style="left:8px;top:116px">Z:</div>
<div class="bed" style="left:20px;top:76px;width:60px;height:18px">0.0</div>
<div class="bed" style="left:81px;top:76px;width:60px;height:18px">29000.0</div>
<div class="bed" style="left:20px;top:95px;width:60px;height:18px">0.0</div>
<div class="bed" style="left:81px;top:95px;width:60px;height:18px">16000.0</div>
<div class="bed" style="left:20px;top:114px;width:60px;height:18px">0.0</div>
<div class="bed" style="left:81px;top:114px;width:60px;height:18px">10000.0</div>
<div class="a" style="left:8px;top:135px;width:132px;height:1px;background:#e8e8ec"></div>
<div class="chk" style="left:9px;top:139px;background:#f4f4f0"></div>
<div class="a wl" style="left:27px;top:140px;color:#e4e4e8">Ctrl+F to Fit Grid Incr.</div>
<div class="wg" style="left:3px;top:168px;width:142px;height:106px"></div>
<div class="a wl" style="left:11px;top:161px;padding:0 3px;font-weight:bold;font-size:11.5px;background:#909098">Information Display</div>
<div class="chk on" style="left:9px;top:178px"></div><div class="a wl" style="left:27px;top:178px"><u>N</u>orth Point</div>
<div class="chk" style="left:9px;top:192px"></div><div class="a wl" style="left:27px;top:192px"><u>A</u>xial Distances</div>
<div class="chk on" style="left:9px;top:206px"></div><div class="a wl" style="left:27px;top:206px">Tranformation <u>O</u>rigin</div>
<div class="chk on" style="left:9px;top:220px"></div><div class="a wl" style="left:27px;top:220px"><u>L</u>egends and Scales</div>
<div class="chk on" style="left:9px;top:234px"></div><div class="a wl" style="left:27px;top:234px"><u>T</u>itles and Text</div>
<div class="bed" style="left:8px;top:250px;width:134px;height:21px;padding-top:2px">Partial Object Detail<div class="ddb" style="right:1px;top:1px;height:15px;width:17px"></div></div>
<div class="wg" style="left:3px;top:284px;width:142px;height:200px"></div>
<div class="a wl" style="left:11px;top:277px;padding:0 3px;font-weight:bold;font-size:11.5px;background:#909098">View Settings</div>
<div class="a wl" style="left:8px;top:294px"><u>P</u>oint Size:</div>
<div class="bed" style="left:62px;top:292px;width:62px;height:18px">350.0</div>
<svg class="a" style="left:127px;top:295px" width="14" height="14"><path d="M6 5v-1.5a2.5 2.5 0 0 1 5 0v2" stroke="#333" stroke-width="1.5" fill="none"/><rect x="1" y="5" width="8" height="6" rx="2" fill="#333"/></svg>
<div class="a" style="left:8px;top:314px;width:132px;height:1px;background:#e8e8ec"></div>
<div class="a wl" style="left:8px;top:318px"><u>N</u>ear Clip:</div>
<div class="bed" style="left:62px;top:316px;width:77px;height:18px">13853.0</div>
<div class="a wl" style="left:8px;top:338px"><u>F</u>ar Clip:</div>
<div class="bed" style="left:62px;top:336px;width:77px;height:18px">50038.6</div>
<div class="a" style="left:8px;top:358px;width:132px;height:1px;background:#e8e8ec"></div>
<div class="a wl" style="left:8px;top:364px">F<u>i</u>t Value:</div>
<div class="bed" style="left:62px;top:362px;width:77px;height:18px">0.650</div>
<div class="a wl" style="left:8px;top:384px"><u>Z</u>oom:</div>
<div class="bed" style="left:62px;top:382px;width:77px;height:18px">1.000</div>
<div class="a" style="left:8px;top:404px;width:132px;height:1px;background:#e8e8ec"></div>
<div class="a wl" style="left:8px;top:410px">Eye A<u>z</u>imuth:</div>
<div class="bed" style="left:75px;top:408px;width:64px;height:18px">-25.0°</div>
<div class="a wl" style="left:8px;top:430px">Eye A<u>l</u>titude:</div>
<div class="bed" style="left:75px;top:428px;width:64px;height:18px">-35.0°</div>
</div>
<!-- settings scrollbar -->
<div class="a" style="left:999px;top:193px;width:18px;height:445px;background:linear-gradient(90deg,#e8e8f0,#fafafc 50%,#e8e8f0);border-left:1px solid #c8c8d4"></div>
<div class="a sbb" style="left:1000px;top:194px;width:16px;height:15px"><svg width="14" height="13"><path d="M3 9l4-4 4 4" stroke="#303040" stroke-width="2" fill="none"/></svg></div>
<div class="a sbb" style="left:1000px;top:209px;width:16px;height:281px"><svg width="14" height="279"><path d="M4 137.5h6M4 139.5h6M4 141.5h6M4 143.5h6" stroke="#a0a0b0" stroke-width="1"/></svg></div>
<div class="a sbb" style="left:1000px;top:622px;width:16px;height:16px"><svg width="14" height="14"><path d="M3 5l4 4 4-4" stroke="#303040" stroke-width="2" fill="none"/></svg></div>
<div class="chk on" style="left:851px;top:643px"></div>
<div class="a" style="left:868px;top:643px;font-size:10.5px;line-height:13px">Automatically Apply Changes</div>
<div class="btn" style="left:849px;top:658px;width:108px;height:21px;line-height:19px;font-weight:bold;font-size:11.5px"><u>A</u>pply Changes</div>
<div class="btn" style="left:957px;top:658px;width:60px;height:21px;line-height:19px;color:#a0a0a0;font-size:11px;text-shadow:1px 1px 0 #fff">Undo Last</div>
<!-- bottom right icons -->
<svg class="a" style="left:815px;top:685px" width="190" height="32">
<path d="M5 6L25 7L23 27L7 25Z" fill="#ececec" stroke="#333" stroke-width="1.3" stroke-linejoin="round"/><path d="M11.7 6.3L12.3 25.7" stroke="#333" stroke-width="1.2"/><path d="M5.7 12.3L24.3 13.7" stroke="#333" stroke-width="1.2"/><path d="M18.3 6.7L17.7 26.3" stroke="#333" stroke-width="1.2"/><path d="M6.3 18.7L23.7 20.3" stroke="#333" stroke-width="1.2"/>
<path d="M9.5 20.0L4.5 26.0" stroke="#111" stroke-width="2.6" stroke-linecap="round"/><circle cx="12.5" cy="17" r="4.6" fill="#d8d8d8" stroke="#222" stroke-width="1.6"/><circle cx="11.0" cy="15.5" r="1.6" fill="#fff"/>
<path d="M35 19L51 6L59 14L45 27Z" fill="#ee1020" stroke="#400" stroke-width="1.3" stroke-linejoin="round"/><path d="M40.3 14.7L49.7 22.7" stroke="#400" stroke-width="1.2"/><path d="M38.3 21.7L53.7 8.7" stroke="#400" stroke-width="1.2"/><path d="M45.7 10.3L54.3 18.3" stroke="#400" stroke-width="1.2"/><path d="M41.7 24.3L56.3 11.3" stroke="#400" stroke-width="1.2"/>
<path d="M40 14l12-8 6 5-12 8z" fill="#fff" stroke="#c00" stroke-width="1"/>
<path d="M40.5 20.0L35.5 26.0" stroke="#111" stroke-width="2.6" stroke-linecap="round"/><circle cx="43.5" cy="17" r="4.6" fill="#d8d8d8" stroke="#222" stroke-width="1.6"/><circle cx="42.0" cy="15.5" r="1.6" fill="#fff"/>
<path d="M66 16l15-10 9 7-14 13z" fill="#888" stroke="#222" stroke-width="1.2"/><path d="M66 16l10 4 14-7M76 20v6" stroke="#333" fill="none"/>
<circle cx="66" cy="16.5" r="1.8" fill="#e8001c" stroke="#fff" stroke-width="0.6"/><circle cx="90" cy="13" r="1.8" fill="#e8001c" stroke="#fff" stroke-width="0.6"/><circle cx="79" cy="27" r="1.8" fill="#e8001c" stroke="#fff" stroke-width="0.6"/><circle cx="74" cy="6" r="1.5" fill="#e8001c"/>
<path d="M71.0 20.0L66.0 26.0" stroke="#111" stroke-width="2.6" stroke-linecap="round"/><circle cx="74" cy="17" r="4.6" fill="#d8d8d8" stroke="#222" stroke-width="1.6"/><circle cx="72.5" cy="15.5" r="1.6" fill="#fff"/>
<path d="M96 17L112 5L120 14L105 27Z" fill="#ee1020" stroke="#300" stroke-width="1.3" stroke-linejoin="round"/><path d="M101.3 13.0L110.0 22.7" stroke="#300" stroke-width="1.2"/><path d="M99.0 20.3L114.7 8.0" stroke="#300" stroke-width="1.2"/><path d="M106.7 9.0L115.0 18.3" stroke="#300" stroke-width="1.2"/><path d="M102.0 23.7L117.3 11.0" stroke="#300" stroke-width="1.2"/>
<path d="M101.5 20.0L96.5 26.0" stroke="#111" stroke-width="2.6" stroke-linecap="round"/><circle cx="104.5" cy="17" r="4.6" fill="#d8d8d8" stroke="#222" stroke-width="1.6"/><circle cx="103.0" cy="15.5" r="1.6" fill="#fff"/>
<path d="M127 15L142 5L151 13L138 27Z" fill="#ee1020" stroke="#300" stroke-width="1.3" stroke-linejoin="round"/><path d="M132.0 11.7L142.3 22.3" stroke="#300" stroke-width="1.2"/><path d="M130.7 19.0L145.0 7.7" stroke="#300" stroke-width="1.2"/><path d="M137.0 8.3L146.7 17.7" stroke="#300" stroke-width="1.2"/><path d="M134.3 23.0L148.0 10.3" stroke="#300" stroke-width="1.2"/>
<path d="M141 15v13l3-3 3 5 2-1-3-5h4z" fill="#f0f0f0" stroke="#444" stroke-width="0.8"/>
<path d="M160 9v-4h4M177 5h4v4M181 23v4h-4M164 27h-4v-4" stroke="#e8001c" stroke-width="2.2" fill="none"/><rect x="163" y="11" width="15" height="12" rx="2" fill="#555" stroke="#222"/><rect x="166" y="8.5" width="6" height="3" fill="#444"/><circle cx="169" cy="17" r="4" fill="#ddd" stroke="#222" stroke-width="1.2"/><circle cx="169" cy="17" r="1.8" fill="#333"/><rect x="174" y="13" width="3" height="8" fill="#ccc"/>
</svg>
<!-- status bar -->
<div class="a sunk" style="left:2px;top:721px;width:70px;height:17px"></div>
<div class="a" style="left:22px;top:723px;font-size:11px;line-height:14px">11/77</div>
<div class="a sunk" style="left:74px;top:721px;width:120px;height:17px"></div>
<div class="a" style="left:77px;top:723px;font-size:11px;line-height:14px">Snaps: <span style="color:#fff">A C</span> G I <span style="color:#fff">L</span> M O P</div>
<div class="a sunk" style="left:196px;top:721px;width:138px;height:17px"></div>
<div class="a" style="left:198px;top:723px;font-size:11px;line-height:14px">Idle</div>
<div class="a sunk" style="left:336px;top:721px;width:688px;height:17px;border-right:0"></div>
<!-- taskbar -->
<div class="a" style="left:0;top:738px;width:1024px;height:30px;background:linear-gradient(#fff 0,#f4f4f8 1px,#a4a4bc 3px,#9c9cb4 6px,#b0b0c4 11px,#d0d0dc 18px,#e4e4ea 23px,#ececf0 27px,#f4f4f6 30px)"></div>
<div class="a" style="left:0;top:737px;width:1024px;height:1px;background:#8888a4"></div>
<div class="a" style="left:0;top:739px;width:97px;height:29px;border-radius:0 12px 12px 0;background:linear-gradient(#5fbf5f 0,#89d889 4px,#3ca03c 10px,#2f8f2f 60%,#2a7e2a 90%,#3a8e3a 100%);box-shadow:inset -2px 0 2px #1e5e1e"></div>
<svg class="a" style="left:9px;top:743px" width="22" height="22">
 <path d="M3 4c2-1 5-1 8 1l-1 6c-3-2-6-2-8-1z" fill="#e8501c"/>
 <path d="M12 5c3 2 6 2 8 1l-2 6c-2 1-5 1-7-1z" fill="#50b030"/>
 <path d="M2 11c2-1 5-1 8 1l-1 6c-3-2-6-2-8-1z" fill="#3070e0"/>
 <path d="M11 12c3 2 6 2 7 1l-1 6c-2 1-5 1-7-1z" fill="#f0c010"/>
</svg>
<div class="a" style="left:34px;top:742px;color:#fff;font-weight:bold;font-style:italic;font-size:18px;line-height:22px;text-shadow:1px 1px 1px #1a4a1a">start</div>
<div class="a" style="left:107px;top:741px;width:159px;height:24px;border:1px solid #4a5262;border-radius:3px;background:linear-gradient(#7a8494,#6a7484 40%,#667080)"></div>
<div class="a" style="left:117px;top:746px;width:16px;height:16px;background:#000"><svg width="16" height="16"><g stroke="#fff" stroke-width="1.3"><line x1="8" y1="1" x2="8" y2="15"/><line x1="1" y1="8" x2="15" y2="8"/><line x1="2.5" y1="2.5" x2="13.5" y2="13.5"/><line x1="13.5" y1="2.5" x2="2.5" y2="13.5"/></g><circle cx="8" cy="8" r="2" fill="#fff"/></svg></div>
<div class="a" style="left:136px;top:747px;color:#fff;font-size:10.8px;line-height:14px">ECOTECT v5</div>
<div class="a" style="left:267px;top:741px;width:159px;height:24px;border:1px solid #a8a8c0;border-radius:3px;background:linear-gradient(#ffffff,#f4f4f8 25%,#dcdce6 70%,#c8c8d8);box-shadow:inset 1px 1px 0 #fff,1px 1px 0 #8888a0"></div>
<svg class="a" style="left:275px;top:745px" width="18" height="18"><path d="M1 4h6l2 2h7v10h-15z" fill="#4a7ad8" stroke="#2a4a98"/><path d="M3 8h14l-2 8h-14z" fill="#8ab4f8" stroke="#2a4a98"/></svg>
<div class="a" style="left:296px;top:747px;font-size:10.8px;line-height:14px">kodra eotect prj</div>
<div class="a" style="left:427px;top:741px;width:159px;height:24px;border:1px solid #a8a8c0;border-radius:3px;background:linear-gradient(#ffffff,#f4f4f8 25%,#dcdce6 70%,#c8c8d8);box-shadow:inset 1px 1px 0 #fff,1px 1px 0 #8888a0"></div>
<svg class="a" style="left:435px;top:745px" width="18" height="18"><path d="M2 4l10-2 2 12-10 2z" fill="#f4f0e0" stroke="#888"/><path d="M6 12l8-9 2 2-8 9z" fill="#e8a020"/><path d="M5 14l3-1 6-6" stroke="#3a8a3a" stroke-width="2"/></svg>
<div class="a" style="left:456px;top:747px;font-size:10.8px;line-height:14px">Adobe Photoshop</div>
<div class="a" style="left:842px;top:745px;width:16px;height:16px;background:#c8c8d0"></div>
<div class="a" style="left:843px;top:747px;font-size:10.8px;line-height:14px">EN</div>
<div class="a" style="left:878px;top:738px;width:146px;height:30px;border-left:1px solid #8c8ca8;background:linear-gradient(#fff 0,#f0f0f6 3px,#dcdce6 8px,#d0d0dc 14px,#e4e4ea 22px,#f0f0f4 30px)"></div>
<svg class="a" style="left:886px;top:744px" width="75" height="20">
 <path d="M3 3c3 0 5-1 6-2 1 1 3 2 6 2 0 6-2 11-6 13-4-2-6-7-6-13z" fill="#f0d020" stroke="#4060a0"/><rect x="8.5" y="5" width="1.5" height="5" fill="#000"/><rect x="8.5" y="11" width="1.5" height="1.5" fill="#000"/>
 <rect x="21" y="6" width="8" height="7" fill="#3050a0" stroke="#203070"/><rect x="26" y="2" width="8" height="7" fill="#3050a0" stroke="#203070"/><path d="M21 15h9M25 13v3" stroke="#5070b0"/>
 <circle cx="45" cy="9" r="7" fill="#888" stroke="#444"/><circle cx="44" cy="8" r="3" fill="#ccc"/><path d="M50 15c2-1 3-3 3-5" stroke="#7080d0" fill="none"/>
 <rect x="57" y="3" width="14" height="9" fill="#fff" stroke="#000"/><rect x="58" y="4" width="4" height="3" fill="#e020e0"/><rect x="62" y="4" width="4" height="3" fill="#30c030"/><rect x="58" y="7" width="4" height="4" fill="#f0f020"/><rect x="62" y="7" width="4" height="4" fill="#2040e0"/><path d="M59 14h10v3h-10z" fill="#fff" stroke="#000"/>
</svg>
<div class="a" style="left:964px;top:747px;font-size:10.8px;line-height:14px">07:21 AM</div>
</body></html>
